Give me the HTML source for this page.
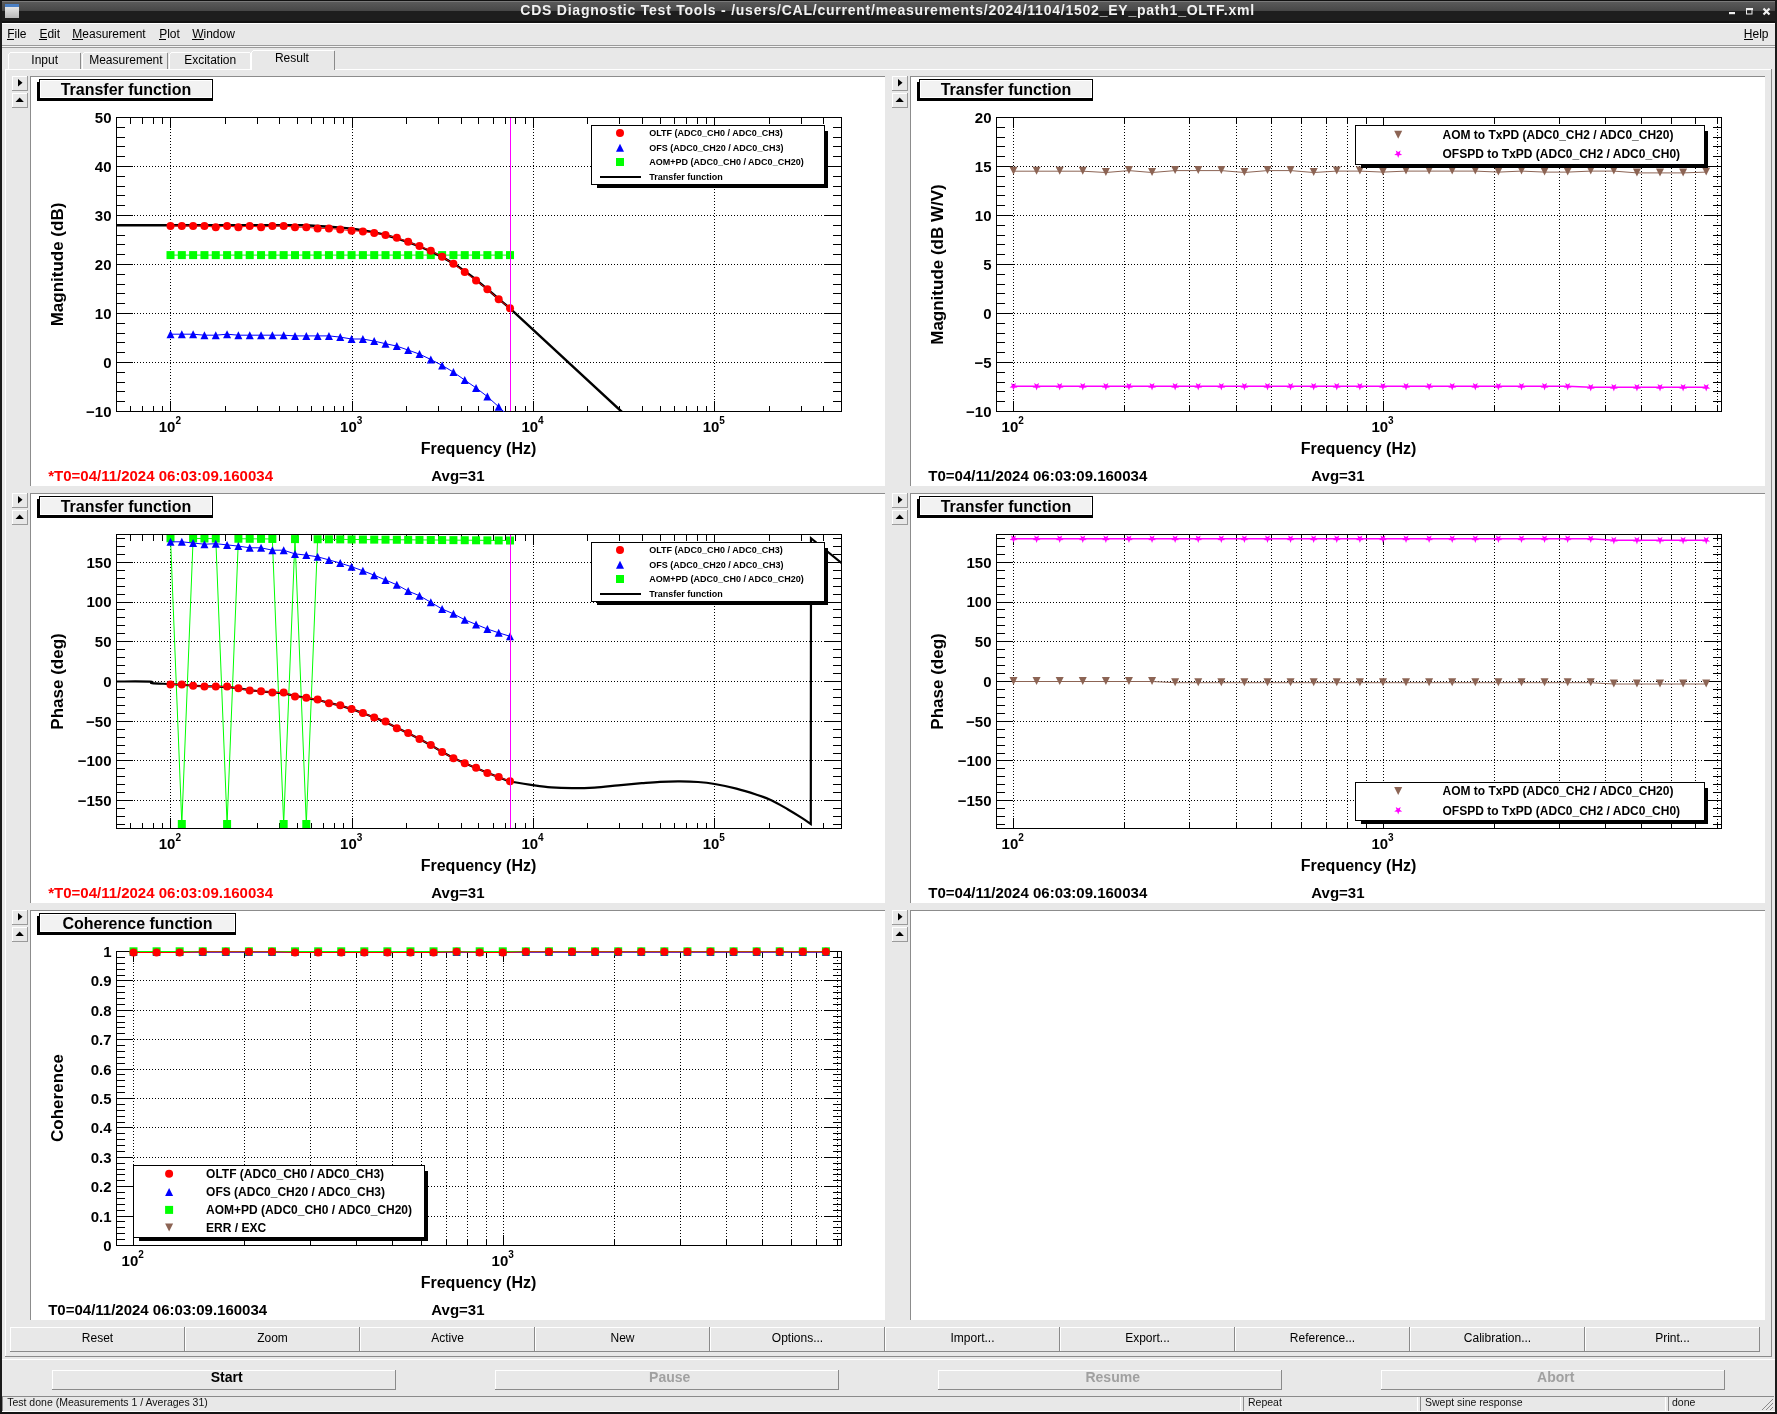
<!DOCTYPE html>
<html><head><meta charset="utf-8"><title>CDS Diagnostic Test Tools</title>
<style>html,body{margin:0;padding:0;background:#e8e8e8;overflow:hidden} svg{display:block;will-change:transform} text{font-family:"Liberation Sans",sans-serif}</style>
</head><body>
<svg width="1777" height="1414" viewBox="0 0 1777 1414" font-family="Liberation Sans, sans-serif">
<rect x="0" y="0" width="1777" height="1414" fill="#e8e8e8" />
<defs><linearGradient id="tbg" x1="0" y1="0" x2="0" y2="1"><stop offset="0" stop-color="#5a5a5a"/><stop offset="1" stop-color="#474747"/></linearGradient><linearGradient id="ico" x1="0" y1="0" x2="0" y2="1"><stop offset="0" stop-color="#f4f4f4"/><stop offset="1" stop-color="#b8b8b8"/></linearGradient></defs>
<rect x="0" y="0" width="1777" height="23" fill="#1e1e1e" />
<rect x="0" y="0" width="1777" height="1" fill="#111" />
<rect x="1" y="1" width="1775" height="1" fill="#7a7a7a" />
<rect x="1" y="2" width="1775" height="9" fill="url(#tbg)" />
<rect x="0" y="21" width="1777" height="2" fill="#121212" />
<rect x="5" y="4" width="14" height="14" fill="url(#ico)" />
<rect x="5" y="4" width="14" height="3" fill="#4a7fc4" />
<text x="520.3" y="14.6" font-size="14" font-weight="bold" text-anchor="start" fill="#f2f2f2" letter-spacing="0.77">CDS Diagnostic Test Tools - /users/CAL/current/measurements/2024/1104/1502_EY_path1_OLTF.xml</text>
<rect x="1729" y="12" width="6" height="2.2" fill="#f0f0f0" />
<rect x="1746.5" y="8.5" width="5.5" height="5.5" fill="none" stroke="#f0f0f0" stroke-width="1"/>
<rect x="1746" y="8" width="7" height="2" fill="#f0f0f0" />
<path d="M1763.5 8.5 L1769.5 14.5 M1769.5 8.5 L1763.5 14.5" stroke="#f0f0f0" stroke-width="2.2"/>
<rect x="0" y="0" width="2" height="1414" fill="#1a1a1a" />
<rect x="1775" y="0" width="2" height="1414" fill="#1a1a1a" />
<rect x="0" y="1412" width="1777" height="2" fill="#141414" />
<rect x="2" y="23" width="1773" height="1" fill="#ffffff" />
<text x="7.2" y="38" font-size="12" font-weight="normal" text-anchor="start" fill="#000" >File</text>
<text x="39.4" y="38" font-size="12" font-weight="normal" text-anchor="start" fill="#000" >Edit</text>
<text x="72.3" y="38" font-size="12" font-weight="normal" text-anchor="start" fill="#000" >Measurement</text>
<text x="159.2" y="38" font-size="12" font-weight="normal" text-anchor="start" fill="#000" >Plot</text>
<text x="192.2" y="38" font-size="12" font-weight="normal" text-anchor="start" fill="#000" >Window</text>
<rect x="7" y="39" width="7" height="1" fill="#000" />
<rect x="39" y="39" width="8" height="1" fill="#000" />
<rect x="72" y="39" width="11" height="1" fill="#000" />
<rect x="159" y="39" width="7" height="1" fill="#000" />
<rect x="192" y="39" width="12" height="1" fill="#000" />
<text x="1743.8" y="38" font-size="12" font-weight="normal" text-anchor="start" fill="#000" >Help</text>
<rect x="1744" y="39" width="9" height="1" fill="#000" />
<rect x="2" y="45" width="1773" height="1" fill="#9a9a9a" />
<rect x="2" y="46" width="1773" height="1" fill="#f4f4f4" />
<rect x="2" y="47" width="1773" height="1" fill="#9a9a9a" />
<rect x="8" y="52" width="73" height="18" fill="#e8e8e8" />
<rect x="10" y="52" width="70" height="1" fill="#ffffff" />
<rect x="8" y="54" width="1" height="16" fill="#ffffff" />
<rect x="9" y="53" width="1" height="1" fill="#fff"/>
<rect x="80" y="53" width="1" height="17" fill="#8a8a8a" />
<text x="44.7" y="64" font-size="12" font-weight="normal" text-anchor="middle" fill="#000" >Input</text>
<rect x="82" y="52" width="86" height="18" fill="#e8e8e8" />
<rect x="84" y="52" width="83" height="1" fill="#ffffff" />
<rect x="82" y="54" width="1" height="16" fill="#ffffff" />
<rect x="83" y="53" width="1" height="1" fill="#fff"/>
<rect x="167" y="53" width="1" height="17" fill="#8a8a8a" />
<text x="125.9" y="64" font-size="12" font-weight="normal" text-anchor="middle" fill="#000" >Measurement</text>
<rect x="169" y="52" width="82" height="18" fill="#e8e8e8" />
<rect x="171" y="52" width="79" height="1" fill="#ffffff" />
<rect x="169" y="54" width="1" height="16" fill="#ffffff" />
<rect x="170" y="53" width="1" height="1" fill="#fff"/>
<rect x="250" y="53" width="1" height="17" fill="#8a8a8a" />
<text x="210.2" y="64" font-size="12" font-weight="normal" text-anchor="middle" fill="#000" >Excitation</text>
<rect x="250" y="53" width="1" height="17" fill="#ffffff" />
<rect x="5" y="69" width="1767" height="1" fill="#ffffff" />
<rect x="5" y="69" width="1" height="1288" fill="#ffffff" />
<rect x="1771" y="69" width="1" height="1288" fill="#8a8a8a" />
<rect x="5" y="1356" width="1767" height="1" fill="#8a8a8a" />
<rect x="251" y="50" width="84" height="20" fill="#e8e8e8" />
<rect x="253" y="50" width="81" height="1" fill="#ffffff" />
<rect x="251" y="52" width="1" height="18" fill="#ffffff" />
<rect x="252" y="51" width="1" height="1" fill="#fff"/>
<rect x="334" y="51" width="1" height="19" fill="#8a8a8a" />
<text x="291.9" y="62" font-size="12" font-weight="normal" text-anchor="middle" fill="#000" >Result</text>
<rect x="252" y="69" width="82" height="1" fill="#e8e8e8" />
<rect x="30" y="76" width="855" height="410" fill="#ffffff" />
<rect x="30" y="76" width="855" height="1" fill="#8c8c8c" />
<rect x="30" y="76" width="1" height="410" fill="#8c8c8c" />
<rect x="910" y="76" width="855" height="410" fill="#ffffff" />
<rect x="910" y="76" width="855" height="1" fill="#8c8c8c" />
<rect x="910" y="76" width="1" height="410" fill="#8c8c8c" />
<rect x="30" y="493" width="855" height="410" fill="#ffffff" />
<rect x="30" y="493" width="855" height="1" fill="#8c8c8c" />
<rect x="30" y="493" width="1" height="410" fill="#8c8c8c" />
<rect x="910" y="493" width="855" height="410" fill="#ffffff" />
<rect x="910" y="493" width="855" height="1" fill="#8c8c8c" />
<rect x="910" y="493" width="1" height="410" fill="#8c8c8c" />
<rect x="30" y="910" width="855" height="410" fill="#ffffff" />
<rect x="30" y="910" width="855" height="1" fill="#8c8c8c" />
<rect x="30" y="910" width="1" height="410" fill="#8c8c8c" />
<rect x="910" y="910" width="855" height="410" fill="#ffffff" />
<rect x="910" y="910" width="855" height="1" fill="#8c8c8c" />
<rect x="910" y="910" width="1" height="410" fill="#8c8c8c" />
<rect x="12" y="76" width="16" height="15" fill="#e8e8e8" />
<rect x="12" y="76" width="16" height="1" fill="#ffffff" />
<rect x="12" y="76" width="1" height="15" fill="#ffffff" />
<rect x="12" y="90" width="16" height="1" fill="#9a9a9a" />
<rect x="27" y="76" width="1" height="15" fill="#9a9a9a" />
<path d="M18 79 L22.5 82.8 L18 86.5 Z" fill="#000"/>
<rect x="12" y="93" width="16" height="15" fill="#e8e8e8" />
<rect x="12" y="93" width="16" height="1" fill="#ffffff" />
<rect x="12" y="93" width="1" height="15" fill="#ffffff" />
<rect x="12" y="107" width="16" height="1" fill="#9a9a9a" />
<rect x="27" y="93" width="1" height="15" fill="#9a9a9a" />
<path d="M15.5 102 L19.7 97.5 L23.8 102 Z" fill="#000"/>
<rect x="12" y="493" width="16" height="15" fill="#e8e8e8" />
<rect x="12" y="493" width="16" height="1" fill="#ffffff" />
<rect x="12" y="493" width="1" height="15" fill="#ffffff" />
<rect x="12" y="507" width="16" height="1" fill="#9a9a9a" />
<rect x="27" y="493" width="1" height="15" fill="#9a9a9a" />
<path d="M18 496 L22.5 499.8 L18 503.5 Z" fill="#000"/>
<rect x="12" y="510" width="16" height="15" fill="#e8e8e8" />
<rect x="12" y="510" width="16" height="1" fill="#ffffff" />
<rect x="12" y="510" width="1" height="15" fill="#ffffff" />
<rect x="12" y="524" width="16" height="1" fill="#9a9a9a" />
<rect x="27" y="510" width="1" height="15" fill="#9a9a9a" />
<path d="M15.5 519 L19.7 514.5 L23.8 519 Z" fill="#000"/>
<rect x="12" y="910" width="16" height="15" fill="#e8e8e8" />
<rect x="12" y="910" width="16" height="1" fill="#ffffff" />
<rect x="12" y="910" width="1" height="15" fill="#ffffff" />
<rect x="12" y="924" width="16" height="1" fill="#9a9a9a" />
<rect x="27" y="910" width="1" height="15" fill="#9a9a9a" />
<path d="M18 913 L22.5 916.8 L18 920.5 Z" fill="#000"/>
<rect x="12" y="927" width="16" height="15" fill="#e8e8e8" />
<rect x="12" y="927" width="16" height="1" fill="#ffffff" />
<rect x="12" y="927" width="1" height="15" fill="#ffffff" />
<rect x="12" y="941" width="16" height="1" fill="#9a9a9a" />
<rect x="27" y="927" width="1" height="15" fill="#9a9a9a" />
<path d="M15.5 936 L19.7 931.5 L23.8 936 Z" fill="#000"/>
<rect x="892" y="76" width="16" height="15" fill="#e8e8e8" />
<rect x="892" y="76" width="16" height="1" fill="#ffffff" />
<rect x="892" y="76" width="1" height="15" fill="#ffffff" />
<rect x="892" y="90" width="16" height="1" fill="#9a9a9a" />
<rect x="907" y="76" width="1" height="15" fill="#9a9a9a" />
<path d="M898 79 L902.5 82.8 L898 86.5 Z" fill="#000"/>
<rect x="892" y="93" width="16" height="15" fill="#e8e8e8" />
<rect x="892" y="93" width="16" height="1" fill="#ffffff" />
<rect x="892" y="93" width="1" height="15" fill="#ffffff" />
<rect x="892" y="107" width="16" height="1" fill="#9a9a9a" />
<rect x="907" y="93" width="1" height="15" fill="#9a9a9a" />
<path d="M895.5 102 L899.7 97.5 L903.8 102 Z" fill="#000"/>
<rect x="892" y="493" width="16" height="15" fill="#e8e8e8" />
<rect x="892" y="493" width="16" height="1" fill="#ffffff" />
<rect x="892" y="493" width="1" height="15" fill="#ffffff" />
<rect x="892" y="507" width="16" height="1" fill="#9a9a9a" />
<rect x="907" y="493" width="1" height="15" fill="#9a9a9a" />
<path d="M898 496 L902.5 499.8 L898 503.5 Z" fill="#000"/>
<rect x="892" y="510" width="16" height="15" fill="#e8e8e8" />
<rect x="892" y="510" width="16" height="1" fill="#ffffff" />
<rect x="892" y="510" width="1" height="15" fill="#ffffff" />
<rect x="892" y="524" width="16" height="1" fill="#9a9a9a" />
<rect x="907" y="510" width="1" height="15" fill="#9a9a9a" />
<path d="M895.5 519 L899.7 514.5 L903.8 519 Z" fill="#000"/>
<rect x="892" y="910" width="16" height="15" fill="#e8e8e8" />
<rect x="892" y="910" width="16" height="1" fill="#ffffff" />
<rect x="892" y="910" width="1" height="15" fill="#ffffff" />
<rect x="892" y="924" width="16" height="1" fill="#9a9a9a" />
<rect x="907" y="910" width="1" height="15" fill="#9a9a9a" />
<path d="M898 913 L902.5 916.8 L898 920.5 Z" fill="#000"/>
<rect x="892" y="927" width="16" height="15" fill="#e8e8e8" />
<rect x="892" y="927" width="16" height="1" fill="#ffffff" />
<rect x="892" y="927" width="1" height="15" fill="#ffffff" />
<rect x="892" y="941" width="16" height="1" fill="#9a9a9a" />
<rect x="907" y="927" width="1" height="15" fill="#9a9a9a" />
<path d="M895.5 936 L899.7 931.5 L903.8 936 Z" fill="#000"/>
<rect x="10" y="1327" width="175" height="1" fill="#ffffff" />
<rect x="10" y="1327" width="1" height="25" fill="#ffffff" />
<rect x="10" y="1351" width="175" height="1" fill="#8a8a8a" />
<rect x="184" y="1327" width="1" height="25" fill="#8a8a8a" />
<text x="97.5" y="1342" font-size="12" font-weight="normal" text-anchor="middle" fill="#000" >Reset</text>
<rect x="185" y="1327" width="175" height="1" fill="#ffffff" />
<rect x="185" y="1327" width="1" height="25" fill="#ffffff" />
<rect x="185" y="1351" width="175" height="1" fill="#8a8a8a" />
<rect x="359" y="1327" width="1" height="25" fill="#8a8a8a" />
<text x="272.5" y="1342" font-size="12" font-weight="normal" text-anchor="middle" fill="#000" >Zoom</text>
<rect x="360" y="1327" width="175" height="1" fill="#ffffff" />
<rect x="360" y="1327" width="1" height="25" fill="#ffffff" />
<rect x="360" y="1351" width="175" height="1" fill="#8a8a8a" />
<rect x="534" y="1327" width="1" height="25" fill="#8a8a8a" />
<text x="447.5" y="1342" font-size="12" font-weight="normal" text-anchor="middle" fill="#000" >Active</text>
<rect x="535" y="1327" width="175" height="1" fill="#ffffff" />
<rect x="535" y="1327" width="1" height="25" fill="#ffffff" />
<rect x="535" y="1351" width="175" height="1" fill="#8a8a8a" />
<rect x="709" y="1327" width="1" height="25" fill="#8a8a8a" />
<text x="622.5" y="1342" font-size="12" font-weight="normal" text-anchor="middle" fill="#000" >New</text>
<rect x="710" y="1327" width="175" height="1" fill="#ffffff" />
<rect x="710" y="1327" width="1" height="25" fill="#ffffff" />
<rect x="710" y="1351" width="175" height="1" fill="#8a8a8a" />
<rect x="884" y="1327" width="1" height="25" fill="#8a8a8a" />
<text x="797.5" y="1342" font-size="12" font-weight="normal" text-anchor="middle" fill="#000" >Options...</text>
<rect x="885" y="1327" width="175" height="1" fill="#ffffff" />
<rect x="885" y="1327" width="1" height="25" fill="#ffffff" />
<rect x="885" y="1351" width="175" height="1" fill="#8a8a8a" />
<rect x="1059" y="1327" width="1" height="25" fill="#8a8a8a" />
<text x="972.5" y="1342" font-size="12" font-weight="normal" text-anchor="middle" fill="#000" >Import...</text>
<rect x="1060" y="1327" width="175" height="1" fill="#ffffff" />
<rect x="1060" y="1327" width="1" height="25" fill="#ffffff" />
<rect x="1060" y="1351" width="175" height="1" fill="#8a8a8a" />
<rect x="1234" y="1327" width="1" height="25" fill="#8a8a8a" />
<text x="1147.5" y="1342" font-size="12" font-weight="normal" text-anchor="middle" fill="#000" >Export...</text>
<rect x="1235" y="1327" width="175" height="1" fill="#ffffff" />
<rect x="1235" y="1327" width="1" height="25" fill="#ffffff" />
<rect x="1235" y="1351" width="175" height="1" fill="#8a8a8a" />
<rect x="1409" y="1327" width="1" height="25" fill="#8a8a8a" />
<text x="1322.5" y="1342" font-size="12" font-weight="normal" text-anchor="middle" fill="#000" >Reference...</text>
<rect x="1410" y="1327" width="175" height="1" fill="#ffffff" />
<rect x="1410" y="1327" width="1" height="25" fill="#ffffff" />
<rect x="1410" y="1351" width="175" height="1" fill="#8a8a8a" />
<rect x="1584" y="1327" width="1" height="25" fill="#8a8a8a" />
<text x="1497.5" y="1342" font-size="12" font-weight="normal" text-anchor="middle" fill="#000" >Calibration...</text>
<rect x="1585" y="1327" width="175" height="1" fill="#ffffff" />
<rect x="1585" y="1327" width="1" height="25" fill="#ffffff" />
<rect x="1585" y="1351" width="175" height="1" fill="#8a8a8a" />
<rect x="1759" y="1327" width="1" height="25" fill="#8a8a8a" />
<text x="1672.5" y="1342" font-size="12" font-weight="normal" text-anchor="middle" fill="#000" >Print...</text>
<rect x="2" y="1359" width="1773" height="1" fill="#ffffff" />
<rect x="52" y="1370" width="344" height="1" fill="#ffffff" />
<rect x="52" y="1370" width="1" height="20" fill="#ffffff" />
<rect x="52" y="1389" width="344" height="1" fill="#8a8a8a" />
<rect x="395" y="1370" width="1" height="20" fill="#8a8a8a" />
<text x="226.7" y="1382" font-size="14" font-weight="bold" text-anchor="middle" fill="#000" >Start</text>
<rect x="495" y="1370" width="344" height="1" fill="#ffffff" />
<rect x="495" y="1370" width="1" height="20" fill="#ffffff" />
<rect x="495" y="1389" width="344" height="1" fill="#8a8a8a" />
<rect x="838" y="1370" width="1" height="20" fill="#8a8a8a" />
<text x="669.7" y="1382" font-size="14" font-weight="bold" text-anchor="middle" fill="#a0a0a0" >Pause</text>
<rect x="938" y="1370" width="344" height="1" fill="#ffffff" />
<rect x="938" y="1370" width="1" height="20" fill="#ffffff" />
<rect x="938" y="1389" width="344" height="1" fill="#8a8a8a" />
<rect x="1281" y="1370" width="1" height="20" fill="#8a8a8a" />
<text x="1112.7" y="1382" font-size="14" font-weight="bold" text-anchor="middle" fill="#a0a0a0" >Resume</text>
<rect x="1381" y="1370" width="344" height="1" fill="#ffffff" />
<rect x="1381" y="1370" width="1" height="20" fill="#ffffff" />
<rect x="1381" y="1389" width="344" height="1" fill="#8a8a8a" />
<rect x="1724" y="1370" width="1" height="20" fill="#8a8a8a" />
<text x="1555.7" y="1382" font-size="14" font-weight="bold" text-anchor="middle" fill="#a0a0a0" >Abort</text>
<rect x="2" y="1396" width="1772" height="1" fill="#8a8a8a" />
<rect x="2" y="1411" width="1773" height="1" fill="#ffffff" />
<rect x="2" y="1397" width="1" height="14" fill="#8a8a8a" />
<rect x="1240" y="1397" width="1" height="14" fill="#ffffff" />
<rect x="1243" y="1397" width="1" height="14" fill="#8a8a8a" />
<rect x="1417" y="1397" width="1" height="14" fill="#ffffff" />
<rect x="1420" y="1397" width="1" height="14" fill="#8a8a8a" />
<rect x="1665" y="1397" width="1" height="14" fill="#ffffff" />
<rect x="1668" y="1397" width="1" height="14" fill="#8a8a8a" />
<text x="7.2" y="1406" font-size="10.5" font-weight="normal" text-anchor="start" fill="#111" >Test done (Measurements 1 / Averages 31)</text>
<text x="1248" y="1406" font-size="10.5" font-weight="normal" text-anchor="start" fill="#111" >Repeat</text>
<text x="1425" y="1406" font-size="10.5" font-weight="normal" text-anchor="start" fill="#111" >Swept sine response</text>
<text x="1672" y="1406" font-size="10.5" font-weight="normal" text-anchor="start" fill="#111" >done</text>
<path d="M1762 1410 L1773 1399 M1766 1410 L1773 1403 M1770 1410 L1773 1407" stroke="#8a8a8a" stroke-width="1"/>
<rect x="37" y="82" width="176" height="19" fill="#000" />
<rect x="39" y="79" width="174" height="20" fill="#000" />
<rect x="40" y="80" width="172" height="18" fill="#ffffff" />
<rect x="41" y="81" width="170" height="16" fill="#f2f2f2" />
<text x="126.0" y="94.8" font-size="16" font-weight="bold" text-anchor="middle" fill="#000" >Transfer function</text>
<path d="M116 166.5 H842 M116 215.5 H842 M116 264.5 H842 M116 313.5 H842 M116 362.5 H842 M170.5 117 V412 M352.5 117 V412 M533.5 117 V412 M714.5 117 V412" stroke="#000" stroke-width="1" stroke-dasharray="1 2" fill="none" shape-rendering="crispEdges"/>
<path d="M116 411.5 h9 M842 411.5 h-9.5 M116 401.5 h9 M842 401.5 h-9.5 M116 391.5 h9 M842 391.5 h-9.5 M116 382.5 h9 M842 382.5 h-9.5 M116 372.5 h9 M842 372.5 h-9.5 M116 362.5 h9 M842 362.5 h-9.5 M116 352.5 h9 M842 352.5 h-9.5 M116 342.5 h9 M842 342.5 h-9.5 M116 333.5 h9 M842 333.5 h-9.5 M116 323.5 h9 M842 323.5 h-9.5 M116 313.5 h9 M842 313.5 h-9.5 M116 303.5 h9 M842 303.5 h-9.5 M116 293.5 h9 M842 293.5 h-9.5 M116 284.5 h9 M842 284.5 h-9.5 M116 274.5 h9 M842 274.5 h-9.5 M116 264.5 h9 M842 264.5 h-9.5 M116 254.5 h9 M842 254.5 h-9.5 M116 244.5 h9 M842 244.5 h-9.5 M116 235.5 h9 M842 235.5 h-9.5 M116 225.5 h9 M842 225.5 h-9.5 M116 215.5 h9 M842 215.5 h-9.5 M116 205.5 h9 M842 205.5 h-9.5 M116 195.5 h9 M842 195.5 h-9.5 M116 186.5 h9 M842 186.5 h-9.5 M116 176.5 h9 M842 176.5 h-9.5 M116 166.5 h9 M842 166.5 h-9.5 M116 156.5 h9 M842 156.5 h-9.5 M116 146.5 h9 M842 146.5 h-9.5 M116 137.5 h9 M842 137.5 h-9.5 M116 127.5 h9 M842 127.5 h-9.5 M116 117.5 h9 M842 117.5 h-9.5 M116 117.5 h17 M842 117.5 h-17 M116 166.5 h17 M842 166.5 h-17 M116 215.5 h17 M842 215.5 h-17 M116 264.5 h17 M842 264.5 h-17 M116 313.5 h17 M842 313.5 h-17 M116 362.5 h17 M842 362.5 h-17 M116 411.5 h17 M842 411.5 h-17 M130.5 412 v-6.5 M130.5 117 v6.5 M142.5 412 v-6.5 M142.5 117 v6.5 M153.5 412 v-6.5 M153.5 117 v6.5 M162.5 412 v-6.5 M162.5 117 v6.5 M170.5 412 v-11 M170.5 117 v11 M225.5 412 v-6.5 M225.5 117 v6.5 M257.5 412 v-6.5 M257.5 117 v6.5 M279.5 412 v-6.5 M279.5 117 v6.5 M297.5 412 v-6.5 M297.5 117 v6.5 M311.5 412 v-6.5 M311.5 117 v6.5 M323.5 412 v-6.5 M323.5 117 v6.5 M334.5 412 v-6.5 M334.5 117 v6.5 M343.5 412 v-6.5 M343.5 117 v6.5 M352.5 412 v-11 M352.5 117 v11 M406.5 412 v-6.5 M406.5 117 v6.5 M438.5 412 v-6.5 M438.5 117 v6.5 M461.5 412 v-6.5 M461.5 117 v6.5 M478.5 412 v-6.5 M478.5 117 v6.5 M493.5 412 v-6.5 M493.5 117 v6.5 M505.5 412 v-6.5 M505.5 117 v6.5 M515.5 412 v-6.5 M515.5 117 v6.5 M525.5 412 v-6.5 M525.5 117 v6.5 M533.5 412 v-11 M533.5 117 v11 M587.5 412 v-6.5 M587.5 117 v6.5 M619.5 412 v-6.5 M619.5 117 v6.5 M642.5 412 v-6.5 M642.5 117 v6.5 M660.5 412 v-6.5 M660.5 117 v6.5 M674.5 412 v-6.5 M674.5 117 v6.5 M686.5 412 v-6.5 M686.5 117 v6.5 M697.5 412 v-6.5 M697.5 117 v6.5 M706.5 412 v-6.5 M706.5 117 v6.5 M714.5 412 v-11 M714.5 117 v11 M769.5 412 v-6.5 M769.5 117 v6.5 M801.5 412 v-6.5 M801.5 117 v6.5 M823.5 412 v-6.5 M823.5 117 v6.5 M841.5 412 v-6.5 M841.5 117 v6.5" stroke="#000" stroke-width="1" fill="none" shape-rendering="crispEdges"/>
<rect x="116.5" y="117.5" width="725" height="294" fill="none" stroke="#000" stroke-width="1" shape-rendering="crispEdges"/>
<text x="111.5" y="122.9" font-size="15" font-weight="bold" text-anchor="end" fill="#000" >50</text>
<text x="111.5" y="171.9" font-size="15" font-weight="bold" text-anchor="end" fill="#000" >40</text>
<text x="111.5" y="220.9" font-size="15" font-weight="bold" text-anchor="end" fill="#000" >30</text>
<text x="111.5" y="269.9" font-size="15" font-weight="bold" text-anchor="end" fill="#000" >20</text>
<text x="111.5" y="318.9" font-size="15" font-weight="bold" text-anchor="end" fill="#000" >10</text>
<text x="111.5" y="367.9" font-size="15" font-weight="bold" text-anchor="end" fill="#000" >0</text>
<text x="111.5" y="416.9" font-size="15" font-weight="bold" text-anchor="end" fill="#000" >−10</text>
<text x="169.90" y="432" font-size="15" font-weight="bold" text-anchor="middle">10<tspan font-size="10" dy="-7.6">2</tspan></text>
<text x="351.20" y="432" font-size="15" font-weight="bold" text-anchor="middle">10<tspan font-size="10" dy="-7.6">3</tspan></text>
<text x="532.50" y="432" font-size="15" font-weight="bold" text-anchor="middle">10<tspan font-size="10" dy="-7.6">4</tspan></text>
<text x="713.80" y="432" font-size="15" font-weight="bold" text-anchor="middle">10<tspan font-size="10" dy="-7.6">5</tspan></text>
<defs>
<clipPath id="c1"><rect x="117" y="118" width="725" height="294"/></clipPath>
<clipPath id="c2"><rect x="117" y="535" width="725" height="294"/></clipPath>
<clipPath id="c3"><rect x="117" y="952" width="725" height="294"/></clipPath>
<clipPath id="c4"><rect x="997" y="118" width="725" height="294"/></clipPath>
<clipPath id="c5"><rect x="997" y="535" width="725" height="294"/></clipPath>
</defs>
<g clip-path="url(#c1)">
<polyline points="170.50,255.10 181.82,255.10 193.13,255.10 204.45,255.10 215.77,255.10 227.09,255.10 238.40,255.10 249.72,255.10 261.04,255.10 272.35,255.10 283.67,255.10 294.99,255.10 306.30,255.10 317.62,255.10 328.94,255.10 340.25,255.10 351.57,255.10 362.89,255.10 374.21,255.10 385.52,255.10 396.84,255.10 408.16,255.10 419.47,255.10 430.79,255.10 442.11,255.10 453.43,255.10 464.74,255.10 476.06,255.10 487.38,255.10 498.69,255.10 510.01,255.10" fill="none" stroke="#00ff00" stroke-width="1" stroke-linejoin="round" />
<rect x="166.50" y="251.10" width="8.00" height="8.00" fill="#00ff00"/>
<rect x="177.82" y="251.10" width="8.00" height="8.00" fill="#00ff00"/>
<rect x="189.13" y="251.10" width="8.00" height="8.00" fill="#00ff00"/>
<rect x="200.45" y="251.10" width="8.00" height="8.00" fill="#00ff00"/>
<rect x="211.77" y="251.10" width="8.00" height="8.00" fill="#00ff00"/>
<rect x="223.09" y="251.10" width="8.00" height="8.00" fill="#00ff00"/>
<rect x="234.40" y="251.10" width="8.00" height="8.00" fill="#00ff00"/>
<rect x="245.72" y="251.10" width="8.00" height="8.00" fill="#00ff00"/>
<rect x="257.04" y="251.10" width="8.00" height="8.00" fill="#00ff00"/>
<rect x="268.35" y="251.10" width="8.00" height="8.00" fill="#00ff00"/>
<rect x="279.67" y="251.10" width="8.00" height="8.00" fill="#00ff00"/>
<rect x="290.99" y="251.10" width="8.00" height="8.00" fill="#00ff00"/>
<rect x="302.30" y="251.10" width="8.00" height="8.00" fill="#00ff00"/>
<rect x="313.62" y="251.10" width="8.00" height="8.00" fill="#00ff00"/>
<rect x="324.94" y="251.10" width="8.00" height="8.00" fill="#00ff00"/>
<rect x="336.25" y="251.10" width="8.00" height="8.00" fill="#00ff00"/>
<rect x="347.57" y="251.10" width="8.00" height="8.00" fill="#00ff00"/>
<rect x="358.89" y="251.10" width="8.00" height="8.00" fill="#00ff00"/>
<rect x="370.21" y="251.10" width="8.00" height="8.00" fill="#00ff00"/>
<rect x="381.52" y="251.10" width="8.00" height="8.00" fill="#00ff00"/>
<rect x="392.84" y="251.10" width="8.00" height="8.00" fill="#00ff00"/>
<rect x="404.16" y="251.10" width="8.00" height="8.00" fill="#00ff00"/>
<rect x="415.47" y="251.10" width="8.00" height="8.00" fill="#00ff00"/>
<rect x="426.79" y="251.10" width="8.00" height="8.00" fill="#00ff00"/>
<rect x="438.11" y="251.10" width="8.00" height="8.00" fill="#00ff00"/>
<rect x="449.43" y="251.10" width="8.00" height="8.00" fill="#00ff00"/>
<rect x="460.74" y="251.10" width="8.00" height="8.00" fill="#00ff00"/>
<rect x="472.06" y="251.10" width="8.00" height="8.00" fill="#00ff00"/>
<rect x="483.38" y="251.10" width="8.00" height="8.00" fill="#00ff00"/>
<rect x="494.69" y="251.10" width="8.00" height="8.00" fill="#00ff00"/>
<rect x="506.01" y="251.10" width="8.00" height="8.00" fill="#00ff00"/>
<polyline points="170.50,334.20 181.82,334.20 193.13,334.20 204.45,335.20 215.77,335.20 227.09,334.20 238.40,335.20 249.72,335.20 261.04,335.20 272.35,335.20 283.67,335.20 294.99,335.90 306.30,335.90 317.62,335.90 328.94,335.90 340.25,337.10 351.57,339.00 362.89,339.00 374.21,341.10 385.52,343.70 396.84,346.10 408.16,350.10 419.47,354.10 430.79,359.50 442.11,365.40 453.43,372.10 464.74,380.10 476.06,387.90 487.38,396.60 498.69,406.80 510.01,417.50" fill="none" stroke="#0000ff" stroke-width="1" stroke-linejoin="round" />
<path d="M166.50 338.20 L170.50 330.20 L174.50 338.20 Z" fill="#0000ff"/>
<path d="M177.82 338.20 L181.82 330.20 L185.82 338.20 Z" fill="#0000ff"/>
<path d="M189.13 338.20 L193.13 330.20 L197.13 338.20 Z" fill="#0000ff"/>
<path d="M200.45 339.20 L204.45 331.20 L208.45 339.20 Z" fill="#0000ff"/>
<path d="M211.77 339.20 L215.77 331.20 L219.77 339.20 Z" fill="#0000ff"/>
<path d="M223.09 338.20 L227.09 330.20 L231.09 338.20 Z" fill="#0000ff"/>
<path d="M234.40 339.20 L238.40 331.20 L242.40 339.20 Z" fill="#0000ff"/>
<path d="M245.72 339.20 L249.72 331.20 L253.72 339.20 Z" fill="#0000ff"/>
<path d="M257.04 339.20 L261.04 331.20 L265.04 339.20 Z" fill="#0000ff"/>
<path d="M268.35 339.20 L272.35 331.20 L276.35 339.20 Z" fill="#0000ff"/>
<path d="M279.67 339.20 L283.67 331.20 L287.67 339.20 Z" fill="#0000ff"/>
<path d="M290.99 339.90 L294.99 331.90 L298.99 339.90 Z" fill="#0000ff"/>
<path d="M302.30 339.90 L306.30 331.90 L310.30 339.90 Z" fill="#0000ff"/>
<path d="M313.62 339.90 L317.62 331.90 L321.62 339.90 Z" fill="#0000ff"/>
<path d="M324.94 339.90 L328.94 331.90 L332.94 339.90 Z" fill="#0000ff"/>
<path d="M336.25 341.10 L340.25 333.10 L344.25 341.10 Z" fill="#0000ff"/>
<path d="M347.57 343.00 L351.57 335.00 L355.57 343.00 Z" fill="#0000ff"/>
<path d="M358.89 343.00 L362.89 335.00 L366.89 343.00 Z" fill="#0000ff"/>
<path d="M370.21 345.10 L374.21 337.10 L378.21 345.10 Z" fill="#0000ff"/>
<path d="M381.52 347.70 L385.52 339.70 L389.52 347.70 Z" fill="#0000ff"/>
<path d="M392.84 350.10 L396.84 342.10 L400.84 350.10 Z" fill="#0000ff"/>
<path d="M404.16 354.10 L408.16 346.10 L412.16 354.10 Z" fill="#0000ff"/>
<path d="M415.47 358.10 L419.47 350.10 L423.47 358.10 Z" fill="#0000ff"/>
<path d="M426.79 363.50 L430.79 355.50 L434.79 363.50 Z" fill="#0000ff"/>
<path d="M438.11 369.40 L442.11 361.40 L446.11 369.40 Z" fill="#0000ff"/>
<path d="M449.43 376.10 L453.43 368.10 L457.43 376.10 Z" fill="#0000ff"/>
<path d="M460.74 384.10 L464.74 376.10 L468.74 384.10 Z" fill="#0000ff"/>
<path d="M472.06 391.90 L476.06 383.90 L480.06 391.90 Z" fill="#0000ff"/>
<path d="M483.38 400.60 L487.38 392.60 L491.38 400.60 Z" fill="#0000ff"/>
<path d="M494.69 410.80 L498.69 402.80 L502.69 410.80 Z" fill="#0000ff"/>
<path d="M116.50 225.30 C125.50 225.30 159.61 225.30 170.50 225.30 C181.39 225.30 178.04 225.30 181.82 225.30 C185.59 225.30 189.36 225.30 193.13 225.30 C196.91 225.30 200.68 225.30 204.45 225.30 C208.22 225.30 212.00 225.30 215.77 225.30 C219.54 225.30 223.31 225.30 227.09 225.30 C230.86 225.30 234.63 225.30 238.40 225.30 C242.17 225.30 245.95 225.30 249.72 225.30 C253.49 225.30 257.26 225.30 261.04 225.30 C264.81 225.30 268.58 225.30 272.35 225.30 C276.13 225.30 279.90 225.30 283.67 225.30 C287.44 225.30 291.21 225.30 294.99 225.30 C298.76 225.30 302.53 225.18 306.30 225.30 C310.08 225.42 313.85 225.77 317.62 226.00 C321.39 226.23 325.17 226.43 328.94 226.70 C332.71 226.97 336.48 227.25 340.25 227.60 C344.03 227.95 347.80 228.33 351.57 228.80 C355.34 229.27 359.12 229.80 362.89 230.40 C366.66 231.00 370.43 231.63 374.21 232.40 C377.98 233.17 381.75 234.02 385.52 235.00 C389.30 235.98 393.07 237.12 396.84 238.30 C400.61 239.48 404.38 240.73 408.16 242.10 C411.93 243.47 415.70 244.95 419.47 246.50 C423.25 248.05 427.02 249.63 430.79 251.40 C434.56 253.17 438.34 255.07 442.11 257.10 C445.88 259.13 449.65 261.25 453.43 263.60 C457.20 265.95 460.97 268.52 464.74 271.20 C468.51 273.88 472.29 276.70 476.06 279.70 C479.83 282.70 483.60 286.02 487.38 289.20 C491.15 292.38 494.92 295.62 498.69 298.80 C502.47 301.98 508.12 306.72 510.01 308.30 L622.5 412.5" fill="none" stroke="#000" stroke-width="2.4"/>
<polyline points="170.50,226.00 181.82,226.00 193.13,226.00 204.45,226.00 215.77,227.20 227.09,226.00 238.40,227.20 249.72,226.00 261.04,227.20 272.35,226.00 283.67,226.00 294.99,227.20 306.30,227.20 317.62,228.40 328.94,228.40 340.25,229.50 351.57,230.70 362.89,231.40 374.21,233.10 385.52,235.00 396.84,237.80 408.16,241.80 419.47,246.10 430.79,250.80 442.11,256.70 453.43,263.80 464.74,272.10 476.06,280.40 487.38,289.30 498.69,299.30 510.01,308.20" fill="none" stroke="#ff0000" stroke-width="1" stroke-linejoin="round" />
<circle cx="170.50" cy="226.00" r="4.00" fill="#ff0000"/>
<circle cx="181.82" cy="226.00" r="4.00" fill="#ff0000"/>
<circle cx="193.13" cy="226.00" r="4.00" fill="#ff0000"/>
<circle cx="204.45" cy="226.00" r="4.00" fill="#ff0000"/>
<circle cx="215.77" cy="227.20" r="4.00" fill="#ff0000"/>
<circle cx="227.09" cy="226.00" r="4.00" fill="#ff0000"/>
<circle cx="238.40" cy="227.20" r="4.00" fill="#ff0000"/>
<circle cx="249.72" cy="226.00" r="4.00" fill="#ff0000"/>
<circle cx="261.04" cy="227.20" r="4.00" fill="#ff0000"/>
<circle cx="272.35" cy="226.00" r="4.00" fill="#ff0000"/>
<circle cx="283.67" cy="226.00" r="4.00" fill="#ff0000"/>
<circle cx="294.99" cy="227.20" r="4.00" fill="#ff0000"/>
<circle cx="306.30" cy="227.20" r="4.00" fill="#ff0000"/>
<circle cx="317.62" cy="228.40" r="4.00" fill="#ff0000"/>
<circle cx="328.94" cy="228.40" r="4.00" fill="#ff0000"/>
<circle cx="340.25" cy="229.50" r="4.00" fill="#ff0000"/>
<circle cx="351.57" cy="230.70" r="4.00" fill="#ff0000"/>
<circle cx="362.89" cy="231.40" r="4.00" fill="#ff0000"/>
<circle cx="374.21" cy="233.10" r="4.00" fill="#ff0000"/>
<circle cx="385.52" cy="235.00" r="4.00" fill="#ff0000"/>
<circle cx="396.84" cy="237.80" r="4.00" fill="#ff0000"/>
<circle cx="408.16" cy="241.80" r="4.00" fill="#ff0000"/>
<circle cx="419.47" cy="246.10" r="4.00" fill="#ff0000"/>
<circle cx="430.79" cy="250.80" r="4.00" fill="#ff0000"/>
<circle cx="442.11" cy="256.70" r="4.00" fill="#ff0000"/>
<circle cx="453.43" cy="263.80" r="4.00" fill="#ff0000"/>
<circle cx="464.74" cy="272.10" r="4.00" fill="#ff0000"/>
<circle cx="476.06" cy="280.40" r="4.00" fill="#ff0000"/>
<circle cx="487.38" cy="289.30" r="4.00" fill="#ff0000"/>
<circle cx="498.69" cy="299.30" r="4.00" fill="#ff0000"/>
<circle cx="510.01" cy="308.20" r="4.00" fill="#ff0000"/>
</g>
<rect x="510" y="118" width="1" height="293" fill="#ff00ff" />
<rect x="597" y="131" width="231" height="57" fill="#000" />
<rect x="591" y="125" width="234" height="60" fill="#000" />
<rect x="592" y="126" width="232" height="58" fill="#fff" />
<circle cx="620.00" cy="133.00" r="4.00" fill="#ff0000"/>
<text x="649.2" y="136.24" font-size="9" font-weight="bold" text-anchor="start" fill="#000" >OLTF (ADC0_CH0 / ADC0_CH3)</text>
<path d="M616.00 151.70 L620.00 143.70 L624.00 151.70 Z" fill="#0000ff"/>
<text x="649.2" y="150.94" font-size="9" font-weight="bold" text-anchor="start" fill="#000" >OFS (ADC0_CH20 / ADC0_CH3)</text>
<rect x="616.00" y="158.00" width="8.00" height="8.00" fill="#00ff00"/>
<text x="649.2" y="165.24" font-size="9" font-weight="bold" text-anchor="start" fill="#000" >AOM+PD (ADC0_CH0 / ADC0_CH20)</text>
<rect x="600" y="176" width="41" height="2" fill="#000" />
<text x="649.2" y="180.24" font-size="9" font-weight="bold" text-anchor="start" fill="#000" >Transfer function</text>
<text x="478.5" y="453.6" font-size="16" font-weight="bold" text-anchor="middle" fill="#000" >Frequency (Hz)</text>
<text transform="translate(63.4,264.5) rotate(-90)" font-size="17" font-weight="bold" text-anchor="middle">Magnitude (dB)</text>
<text x="48.2" y="480.5" font-size="15" font-weight="bold" text-anchor="start" fill="#ff0000" >*T0=04/11/2024 06:03:09.160034</text>
<text x="431.3" y="480.5" font-size="15" font-weight="bold" text-anchor="start" fill="#000" >Avg=31</text>
<rect x="37" y="499" width="176" height="19" fill="#000" />
<rect x="39" y="496" width="174" height="20" fill="#000" />
<rect x="40" y="497" width="172" height="18" fill="#ffffff" />
<rect x="41" y="498" width="170" height="16" fill="#f2f2f2" />
<text x="126.0" y="511.8" font-size="16" font-weight="bold" text-anchor="middle" fill="#000" >Transfer function</text>
<path d="M116 562.5 H842 M116 602.5 H842 M116 641.5 H842 M116 681.5 H842 M116 721.5 H842 M116 760.5 H842 M116 800.5 H842 M170.5 534 V829 M352.5 534 V829 M533.5 534 V829 M714.5 534 V829" stroke="#000" stroke-width="1" stroke-dasharray="1 2" fill="none" shape-rendering="crispEdges"/>
<path d="M116 824.5 h9 M842 824.5 h-9.5 M116 816.5 h9 M842 816.5 h-9.5 M116 808.5 h9 M842 808.5 h-9.5 M116 800.5 h9 M842 800.5 h-9.5 M116 792.5 h9 M842 792.5 h-9.5 M116 784.5 h9 M842 784.5 h-9.5 M116 776.5 h9 M842 776.5 h-9.5 M116 768.5 h9 M842 768.5 h-9.5 M116 760.5 h9 M842 760.5 h-9.5 M116 753.5 h9 M842 753.5 h-9.5 M116 745.5 h9 M842 745.5 h-9.5 M116 737.5 h9 M842 737.5 h-9.5 M116 729.5 h9 M842 729.5 h-9.5 M116 721.5 h9 M842 721.5 h-9.5 M116 713.5 h9 M842 713.5 h-9.5 M116 705.5 h9 M842 705.5 h-9.5 M116 697.5 h9 M842 697.5 h-9.5 M116 689.5 h9 M842 689.5 h-9.5 M116 681.5 h9 M842 681.5 h-9.5 M116 673.5 h9 M842 673.5 h-9.5 M116 665.5 h9 M842 665.5 h-9.5 M116 657.5 h9 M842 657.5 h-9.5 M116 649.5 h9 M842 649.5 h-9.5 M116 641.5 h9 M842 641.5 h-9.5 M116 633.5 h9 M842 633.5 h-9.5 M116 625.5 h9 M842 625.5 h-9.5 M116 617.5 h9 M842 617.5 h-9.5 M116 609.5 h9 M842 609.5 h-9.5 M116 602.5 h9 M842 602.5 h-9.5 M116 594.5 h9 M842 594.5 h-9.5 M116 586.5 h9 M842 586.5 h-9.5 M116 578.5 h9 M842 578.5 h-9.5 M116 570.5 h9 M842 570.5 h-9.5 M116 562.5 h9 M842 562.5 h-9.5 M116 554.5 h9 M842 554.5 h-9.5 M116 546.5 h9 M842 546.5 h-9.5 M116 538.5 h9 M842 538.5 h-9.5 M116 562.5 h17 M842 562.5 h-17 M116 602.5 h17 M842 602.5 h-17 M116 641.5 h17 M842 641.5 h-17 M116 681.5 h17 M842 681.5 h-17 M116 721.5 h17 M842 721.5 h-17 M116 760.5 h17 M842 760.5 h-17 M116 800.5 h17 M842 800.5 h-17 M130.5 829 v-6.5 M130.5 534 v6.5 M142.5 829 v-6.5 M142.5 534 v6.5 M153.5 829 v-6.5 M153.5 534 v6.5 M162.5 829 v-6.5 M162.5 534 v6.5 M170.5 829 v-11 M170.5 534 v11 M225.5 829 v-6.5 M225.5 534 v6.5 M257.5 829 v-6.5 M257.5 534 v6.5 M279.5 829 v-6.5 M279.5 534 v6.5 M297.5 829 v-6.5 M297.5 534 v6.5 M311.5 829 v-6.5 M311.5 534 v6.5 M323.5 829 v-6.5 M323.5 534 v6.5 M334.5 829 v-6.5 M334.5 534 v6.5 M343.5 829 v-6.5 M343.5 534 v6.5 M352.5 829 v-11 M352.5 534 v11 M406.5 829 v-6.5 M406.5 534 v6.5 M438.5 829 v-6.5 M438.5 534 v6.5 M461.5 829 v-6.5 M461.5 534 v6.5 M478.5 829 v-6.5 M478.5 534 v6.5 M493.5 829 v-6.5 M493.5 534 v6.5 M505.5 829 v-6.5 M505.5 534 v6.5 M515.5 829 v-6.5 M515.5 534 v6.5 M525.5 829 v-6.5 M525.5 534 v6.5 M533.5 829 v-11 M533.5 534 v11 M587.5 829 v-6.5 M587.5 534 v6.5 M619.5 829 v-6.5 M619.5 534 v6.5 M642.5 829 v-6.5 M642.5 534 v6.5 M660.5 829 v-6.5 M660.5 534 v6.5 M674.5 829 v-6.5 M674.5 534 v6.5 M686.5 829 v-6.5 M686.5 534 v6.5 M697.5 829 v-6.5 M697.5 534 v6.5 M706.5 829 v-6.5 M706.5 534 v6.5 M714.5 829 v-11 M714.5 534 v11 M769.5 829 v-6.5 M769.5 534 v6.5 M801.5 829 v-6.5 M801.5 534 v6.5 M823.5 829 v-6.5 M823.5 534 v6.5 M841.5 829 v-6.5 M841.5 534 v6.5" stroke="#000" stroke-width="1" fill="none" shape-rendering="crispEdges"/>
<rect x="116.5" y="534.5" width="725" height="294" fill="none" stroke="#000" stroke-width="1" shape-rendering="crispEdges"/>
<text x="111.5" y="567.7108108108108" font-size="15" font-weight="bold" text-anchor="end" fill="#000" >150</text>
<text x="111.5" y="607.4405405405405" font-size="15" font-weight="bold" text-anchor="end" fill="#000" >100</text>
<text x="111.5" y="647.1702702702703" font-size="15" font-weight="bold" text-anchor="end" fill="#000" >50</text>
<text x="111.5" y="686.9" font-size="15" font-weight="bold" text-anchor="end" fill="#000" >0</text>
<text x="111.5" y="726.6297297297298" font-size="15" font-weight="bold" text-anchor="end" fill="#000" >−50</text>
<text x="111.5" y="766.3594594594595" font-size="15" font-weight="bold" text-anchor="end" fill="#000" >−100</text>
<text x="111.5" y="806.0891891891891" font-size="15" font-weight="bold" text-anchor="end" fill="#000" >−150</text>
<text x="169.90" y="849" font-size="15" font-weight="bold" text-anchor="middle">10<tspan font-size="10" dy="-7.6">2</tspan></text>
<text x="351.20" y="849" font-size="15" font-weight="bold" text-anchor="middle">10<tspan font-size="10" dy="-7.6">3</tspan></text>
<text x="532.50" y="849" font-size="15" font-weight="bold" text-anchor="middle">10<tspan font-size="10" dy="-7.6">4</tspan></text>
<text x="713.80" y="849" font-size="15" font-weight="bold" text-anchor="middle">10<tspan font-size="10" dy="-7.6">5</tspan></text>
<g clip-path="url(#c2)">
<polyline points="170.50,538.30 181.82,824.00 193.13,538.45 204.45,538.52 215.77,538.59 227.09,824.00 238.40,538.74 249.72,538.81 261.04,538.89 272.35,538.96 283.67,824.00 294.99,539.11 306.30,824.00 317.62,539.25 328.94,539.33 340.25,539.40 351.57,539.47 362.89,539.55 374.21,539.62 385.52,539.69 396.84,539.77 408.16,539.84 419.47,539.91 430.79,539.99 442.11,540.06 453.43,540.13 464.74,540.21 476.06,540.28 487.38,540.35 498.69,540.43 510.01,540.50" fill="none" stroke="#00ff00" stroke-width="1" stroke-linejoin="round" />
<rect x="166.50" y="534.30" width="8.00" height="8.00" fill="#00ff00"/>
<rect x="177.82" y="820.00" width="8.00" height="8.00" fill="#00ff00"/>
<rect x="189.13" y="534.45" width="8.00" height="8.00" fill="#00ff00"/>
<rect x="200.45" y="534.52" width="8.00" height="8.00" fill="#00ff00"/>
<rect x="211.77" y="534.59" width="8.00" height="8.00" fill="#00ff00"/>
<rect x="223.09" y="820.00" width="8.00" height="8.00" fill="#00ff00"/>
<rect x="234.40" y="534.74" width="8.00" height="8.00" fill="#00ff00"/>
<rect x="245.72" y="534.81" width="8.00" height="8.00" fill="#00ff00"/>
<rect x="257.04" y="534.89" width="8.00" height="8.00" fill="#00ff00"/>
<rect x="268.35" y="534.96" width="8.00" height="8.00" fill="#00ff00"/>
<rect x="279.67" y="820.00" width="8.00" height="8.00" fill="#00ff00"/>
<rect x="290.99" y="535.11" width="8.00" height="8.00" fill="#00ff00"/>
<rect x="302.30" y="820.00" width="8.00" height="8.00" fill="#00ff00"/>
<rect x="313.62" y="535.25" width="8.00" height="8.00" fill="#00ff00"/>
<rect x="324.94" y="535.33" width="8.00" height="8.00" fill="#00ff00"/>
<rect x="336.25" y="535.40" width="8.00" height="8.00" fill="#00ff00"/>
<rect x="347.57" y="535.47" width="8.00" height="8.00" fill="#00ff00"/>
<rect x="358.89" y="535.55" width="8.00" height="8.00" fill="#00ff00"/>
<rect x="370.21" y="535.62" width="8.00" height="8.00" fill="#00ff00"/>
<rect x="381.52" y="535.69" width="8.00" height="8.00" fill="#00ff00"/>
<rect x="392.84" y="535.77" width="8.00" height="8.00" fill="#00ff00"/>
<rect x="404.16" y="535.84" width="8.00" height="8.00" fill="#00ff00"/>
<rect x="415.47" y="535.91" width="8.00" height="8.00" fill="#00ff00"/>
<rect x="426.79" y="535.99" width="8.00" height="8.00" fill="#00ff00"/>
<rect x="438.11" y="536.06" width="8.00" height="8.00" fill="#00ff00"/>
<rect x="449.43" y="536.13" width="8.00" height="8.00" fill="#00ff00"/>
<rect x="460.74" y="536.21" width="8.00" height="8.00" fill="#00ff00"/>
<rect x="472.06" y="536.28" width="8.00" height="8.00" fill="#00ff00"/>
<rect x="483.38" y="536.35" width="8.00" height="8.00" fill="#00ff00"/>
<rect x="494.69" y="536.43" width="8.00" height="8.00" fill="#00ff00"/>
<rect x="506.01" y="536.50" width="8.00" height="8.00" fill="#00ff00"/>
<polyline points="170.50,541.80 181.82,541.80 193.13,543.00 204.45,544.20 215.77,543.70 227.09,544.90 238.40,546.10 249.72,547.80 261.04,547.80 272.35,550.20 283.67,550.20 294.99,553.90 306.30,555.10 317.62,556.80 328.94,559.90 340.25,563.10 351.57,566.70 362.89,570.80 374.21,575.20 385.52,580.00 396.84,584.80 408.16,591.10 419.47,595.70 430.79,602.30 442.11,609.00 453.43,613.80 464.74,619.80 476.06,624.40 487.38,629.00 498.69,632.80 510.01,636.30" fill="none" stroke="#0000ff" stroke-width="1" stroke-linejoin="round" />
<path d="M166.50 545.80 L170.50 537.80 L174.50 545.80 Z" fill="#0000ff"/>
<path d="M177.82 545.80 L181.82 537.80 L185.82 545.80 Z" fill="#0000ff"/>
<path d="M189.13 547.00 L193.13 539.00 L197.13 547.00 Z" fill="#0000ff"/>
<path d="M200.45 548.20 L204.45 540.20 L208.45 548.20 Z" fill="#0000ff"/>
<path d="M211.77 547.70 L215.77 539.70 L219.77 547.70 Z" fill="#0000ff"/>
<path d="M223.09 548.90 L227.09 540.90 L231.09 548.90 Z" fill="#0000ff"/>
<path d="M234.40 550.10 L238.40 542.10 L242.40 550.10 Z" fill="#0000ff"/>
<path d="M245.72 551.80 L249.72 543.80 L253.72 551.80 Z" fill="#0000ff"/>
<path d="M257.04 551.80 L261.04 543.80 L265.04 551.80 Z" fill="#0000ff"/>
<path d="M268.35 554.20 L272.35 546.20 L276.35 554.20 Z" fill="#0000ff"/>
<path d="M279.67 554.20 L283.67 546.20 L287.67 554.20 Z" fill="#0000ff"/>
<path d="M290.99 557.90 L294.99 549.90 L298.99 557.90 Z" fill="#0000ff"/>
<path d="M302.30 559.10 L306.30 551.10 L310.30 559.10 Z" fill="#0000ff"/>
<path d="M313.62 560.80 L317.62 552.80 L321.62 560.80 Z" fill="#0000ff"/>
<path d="M324.94 563.90 L328.94 555.90 L332.94 563.90 Z" fill="#0000ff"/>
<path d="M336.25 567.10 L340.25 559.10 L344.25 567.10 Z" fill="#0000ff"/>
<path d="M347.57 570.70 L351.57 562.70 L355.57 570.70 Z" fill="#0000ff"/>
<path d="M358.89 574.80 L362.89 566.80 L366.89 574.80 Z" fill="#0000ff"/>
<path d="M370.21 579.20 L374.21 571.20 L378.21 579.20 Z" fill="#0000ff"/>
<path d="M381.52 584.00 L385.52 576.00 L389.52 584.00 Z" fill="#0000ff"/>
<path d="M392.84 588.80 L396.84 580.80 L400.84 588.80 Z" fill="#0000ff"/>
<path d="M404.16 595.10 L408.16 587.10 L412.16 595.10 Z" fill="#0000ff"/>
<path d="M415.47 599.70 L419.47 591.70 L423.47 599.70 Z" fill="#0000ff"/>
<path d="M426.79 606.30 L430.79 598.30 L434.79 606.30 Z" fill="#0000ff"/>
<path d="M438.11 613.00 L442.11 605.00 L446.11 613.00 Z" fill="#0000ff"/>
<path d="M449.43 617.80 L453.43 609.80 L457.43 617.80 Z" fill="#0000ff"/>
<path d="M460.74 623.80 L464.74 615.80 L468.74 623.80 Z" fill="#0000ff"/>
<path d="M472.06 628.40 L476.06 620.40 L480.06 628.40 Z" fill="#0000ff"/>
<path d="M483.38 633.00 L487.38 625.00 L491.38 633.00 Z" fill="#0000ff"/>
<path d="M494.69 636.80 L498.69 628.80 L502.69 636.80 Z" fill="#0000ff"/>
<path d="M506.01 640.30 L510.01 632.30 L514.01 640.30 Z" fill="#0000ff"/>
<path d="M116.50 681.50 C122.08 681.52 144.08 681.32 150.00 681.60 C155.92 681.88 148.58 682.80 152.00 683.20 C155.42 683.60 165.53 683.73 170.50 684.00 C175.47 684.27 178.04 684.53 181.82 684.80 C185.59 685.07 189.36 685.35 193.13 685.60 C196.91 685.85 200.68 686.15 204.45 686.30 C208.22 686.45 212.00 686.40 215.77 686.50 C219.54 686.60 223.31 686.61 227.09 686.92 C230.86 687.24 234.63 687.83 238.40 688.38 C242.17 688.92 245.95 689.67 249.72 690.17 C253.49 690.68 257.26 691.09 261.04 691.42 C264.81 691.76 268.58 691.85 272.35 692.20 C276.13 692.55 279.90 692.91 283.67 693.52 C287.44 694.14 291.21 695.14 294.99 695.88 C298.76 696.61 302.53 697.24 306.30 697.92 C310.08 698.61 313.85 699.19 317.62 700.00 C321.39 700.81 325.17 701.83 328.94 702.78 C332.71 703.72 336.48 704.62 340.25 705.68 C344.03 706.73 347.80 707.85 351.57 709.10 C355.34 710.35 359.12 711.77 362.89 713.15 C366.66 714.53 370.43 715.87 374.21 717.38 C377.98 718.88 381.75 720.45 385.52 722.17 C389.30 723.90 393.07 725.85 396.84 727.70 C400.61 729.55 404.38 731.39 408.16 733.27 C411.93 735.16 415.70 737.01 419.47 739.00 C423.25 740.99 427.02 743.10 430.79 745.23 C434.56 747.35 438.34 749.66 442.11 751.78 C445.88 753.89 449.65 756.03 453.43 757.92 C457.20 759.82 460.97 761.47 464.74 763.15 C468.51 764.83 472.29 766.40 476.06 768.00 C479.83 769.60 483.60 771.23 487.38 772.75 C491.15 774.27 494.92 775.67 498.69 777.10 C502.47 778.52 504.21 779.95 510.01 781.30 C515.81 782.65 526.63 784.18 533.50 785.20 C540.37 786.22 544.78 786.90 551.20 787.40 C557.62 787.90 564.78 788.17 572.00 788.20 C579.22 788.23 586.80 788.07 594.50 787.60 C602.20 787.13 610.32 786.13 618.20 785.40 C626.08 784.67 634.83 783.80 641.80 783.20 C648.77 782.60 653.63 782.10 660.00 781.80 C666.37 781.50 673.67 781.37 680.00 781.40 C686.33 781.43 692.22 781.57 698.00 782.00 C703.78 782.43 708.30 782.90 714.70 784.00 C721.10 785.10 729.52 786.85 736.40 788.60 C743.28 790.35 750.10 792.53 756.00 794.50 C761.90 796.47 766.53 797.95 771.80 800.40 C777.07 802.85 782.67 806.33 787.60 809.20 C792.53 812.07 797.53 815.13 801.40 817.60 C805.27 820.07 809.23 822.93 810.80 824.00 L811 538.2 L842 563.5" fill="none" stroke="#000" stroke-width="2.2" stroke-linejoin="miter"/>
<polyline points="170.50,684.50 181.82,684.50 193.13,685.70 204.45,686.50 215.77,686.50 227.09,686.50 238.40,688.20 249.72,690.60 261.04,691.30 272.35,692.50 283.67,692.50 294.99,696.60 306.30,697.80 317.62,699.50 328.94,703.20 340.25,705.20 351.57,709.10 362.89,713.00 374.21,717.50 385.52,721.50 396.84,728.20 408.16,732.90 419.47,739.10 430.79,744.90 442.11,752.00 453.43,758.20 464.74,763.30 476.06,767.80 487.38,773.10 498.69,777.00 510.01,781.30" fill="none" stroke="#ff0000" stroke-width="1" stroke-linejoin="round" />
<circle cx="170.50" cy="684.50" r="4.00" fill="#ff0000"/>
<circle cx="181.82" cy="684.50" r="4.00" fill="#ff0000"/>
<circle cx="193.13" cy="685.70" r="4.00" fill="#ff0000"/>
<circle cx="204.45" cy="686.50" r="4.00" fill="#ff0000"/>
<circle cx="215.77" cy="686.50" r="4.00" fill="#ff0000"/>
<circle cx="227.09" cy="686.50" r="4.00" fill="#ff0000"/>
<circle cx="238.40" cy="688.20" r="4.00" fill="#ff0000"/>
<circle cx="249.72" cy="690.60" r="4.00" fill="#ff0000"/>
<circle cx="261.04" cy="691.30" r="4.00" fill="#ff0000"/>
<circle cx="272.35" cy="692.50" r="4.00" fill="#ff0000"/>
<circle cx="283.67" cy="692.50" r="4.00" fill="#ff0000"/>
<circle cx="294.99" cy="696.60" r="4.00" fill="#ff0000"/>
<circle cx="306.30" cy="697.80" r="4.00" fill="#ff0000"/>
<circle cx="317.62" cy="699.50" r="4.00" fill="#ff0000"/>
<circle cx="328.94" cy="703.20" r="4.00" fill="#ff0000"/>
<circle cx="340.25" cy="705.20" r="4.00" fill="#ff0000"/>
<circle cx="351.57" cy="709.10" r="4.00" fill="#ff0000"/>
<circle cx="362.89" cy="713.00" r="4.00" fill="#ff0000"/>
<circle cx="374.21" cy="717.50" r="4.00" fill="#ff0000"/>
<circle cx="385.52" cy="721.50" r="4.00" fill="#ff0000"/>
<circle cx="396.84" cy="728.20" r="4.00" fill="#ff0000"/>
<circle cx="408.16" cy="732.90" r="4.00" fill="#ff0000"/>
<circle cx="419.47" cy="739.10" r="4.00" fill="#ff0000"/>
<circle cx="430.79" cy="744.90" r="4.00" fill="#ff0000"/>
<circle cx="442.11" cy="752.00" r="4.00" fill="#ff0000"/>
<circle cx="453.43" cy="758.20" r="4.00" fill="#ff0000"/>
<circle cx="464.74" cy="763.30" r="4.00" fill="#ff0000"/>
<circle cx="476.06" cy="767.80" r="4.00" fill="#ff0000"/>
<circle cx="487.38" cy="773.10" r="4.00" fill="#ff0000"/>
<circle cx="498.69" cy="777.00" r="4.00" fill="#ff0000"/>
<circle cx="510.01" cy="781.30" r="4.00" fill="#ff0000"/>
</g>
<rect x="510" y="535" width="1" height="293" fill="#ff00ff" />
<rect x="597" y="548" width="231" height="57" fill="#000" />
<rect x="591" y="542" width="234" height="60" fill="#000" />
<rect x="592" y="543" width="232" height="58" fill="#fff" />
<circle cx="620.00" cy="550.00" r="4.00" fill="#ff0000"/>
<text x="649.2" y="553.24" font-size="9" font-weight="bold" text-anchor="start" fill="#000" >OLTF (ADC0_CH0 / ADC0_CH3)</text>
<path d="M616.00 568.70 L620.00 560.70 L624.00 568.70 Z" fill="#0000ff"/>
<text x="649.2" y="567.94" font-size="9" font-weight="bold" text-anchor="start" fill="#000" >OFS (ADC0_CH20 / ADC0_CH3)</text>
<rect x="616.00" y="575.00" width="8.00" height="8.00" fill="#00ff00"/>
<text x="649.2" y="582.24" font-size="9" font-weight="bold" text-anchor="start" fill="#000" >AOM+PD (ADC0_CH0 / ADC0_CH20)</text>
<rect x="600" y="593" width="41" height="2" fill="#000" />
<text x="649.2" y="597.24" font-size="9" font-weight="bold" text-anchor="start" fill="#000" >Transfer function</text>
<text x="478.5" y="870.6" font-size="16" font-weight="bold" text-anchor="middle" fill="#000" >Frequency (Hz)</text>
<text transform="translate(63.4,681.5) rotate(-90)" font-size="17" font-weight="bold" text-anchor="middle">Phase (deg)</text>
<text x="48.2" y="897.5" font-size="15" font-weight="bold" text-anchor="start" fill="#ff0000" >*T0=04/11/2024 06:03:09.160034</text>
<text x="431.3" y="897.5" font-size="15" font-weight="bold" text-anchor="start" fill="#000" >Avg=31</text>
<rect x="37" y="916" width="199" height="19" fill="#000" />
<rect x="39" y="913" width="197" height="20" fill="#000" />
<rect x="40" y="914" width="195" height="18" fill="#ffffff" />
<rect x="41" y="915" width="193" height="16" fill="#f2f2f2" />
<text x="137.5" y="928.8" font-size="16" font-weight="bold" text-anchor="middle" fill="#000" >Coherence function</text>
<path d="M116 980.5 H842 M116 1010.5 H842 M116 1039.5 H842 M116 1069.5 H842 M116 1098.5 H842 M116 1127.5 H842 M116 1157.5 H842 M116 1186.5 H842 M116 1216.5 H842 M133.5 951 V1246 M244.5 951 V1246 M310.5 951 V1246 M356.5 951 V1246 M392.5 951 V1246 M421.5 951 V1246 M446.5 951 V1246 M467.5 951 V1246 M486.5 951 V1246 M503.5 951 V1246 M614.5 951 V1246 M680.5 951 V1246 M726.5 951 V1246 M762.5 951 V1246 M791.5 951 V1246 M816.5 951 V1246 M837.5 951 V1246" stroke="#000" stroke-width="1" stroke-dasharray="1 2" fill="none" shape-rendering="crispEdges"/>
<path d="M116 1245.5 h9 M842 1245.5 h-9.5 M116 1239.5 h9 M842 1239.5 h-9.5 M116 1233.5 h9 M842 1233.5 h-9.5 M116 1227.5 h9 M842 1227.5 h-9.5 M116 1221.5 h9 M842 1221.5 h-9.5 M116 1216.5 h9 M842 1216.5 h-9.5 M116 1210.5 h9 M842 1210.5 h-9.5 M116 1204.5 h9 M842 1204.5 h-9.5 M116 1198.5 h9 M842 1198.5 h-9.5 M116 1192.5 h9 M842 1192.5 h-9.5 M116 1186.5 h9 M842 1186.5 h-9.5 M116 1180.5 h9 M842 1180.5 h-9.5 M116 1174.5 h9 M842 1174.5 h-9.5 M116 1169.5 h9 M842 1169.5 h-9.5 M116 1163.5 h9 M842 1163.5 h-9.5 M116 1157.5 h9 M842 1157.5 h-9.5 M116 1151.5 h9 M842 1151.5 h-9.5 M116 1145.5 h9 M842 1145.5 h-9.5 M116 1139.5 h9 M842 1139.5 h-9.5 M116 1133.5 h9 M842 1133.5 h-9.5 M116 1127.5 h9 M842 1127.5 h-9.5 M116 1122.5 h9 M842 1122.5 h-9.5 M116 1116.5 h9 M842 1116.5 h-9.5 M116 1110.5 h9 M842 1110.5 h-9.5 M116 1104.5 h9 M842 1104.5 h-9.5 M116 1098.5 h9 M842 1098.5 h-9.5 M116 1092.5 h9 M842 1092.5 h-9.5 M116 1086.5 h9 M842 1086.5 h-9.5 M116 1080.5 h9 M842 1080.5 h-9.5 M116 1074.5 h9 M842 1074.5 h-9.5 M116 1069.5 h9 M842 1069.5 h-9.5 M116 1063.5 h9 M842 1063.5 h-9.5 M116 1057.5 h9 M842 1057.5 h-9.5 M116 1051.5 h9 M842 1051.5 h-9.5 M116 1045.5 h9 M842 1045.5 h-9.5 M116 1039.5 h9 M842 1039.5 h-9.5 M116 1033.5 h9 M842 1033.5 h-9.5 M116 1027.5 h9 M842 1027.5 h-9.5 M116 1022.5 h9 M842 1022.5 h-9.5 M116 1016.5 h9 M842 1016.5 h-9.5 M116 1010.5 h9 M842 1010.5 h-9.5 M116 1004.5 h9 M842 1004.5 h-9.5 M116 998.5 h9 M842 998.5 h-9.5 M116 992.5 h9 M842 992.5 h-9.5 M116 986.5 h9 M842 986.5 h-9.5 M116 980.5 h9 M842 980.5 h-9.5 M116 975.5 h9 M842 975.5 h-9.5 M116 969.5 h9 M842 969.5 h-9.5 M116 963.5 h9 M842 963.5 h-9.5 M116 957.5 h9 M842 957.5 h-9.5 M116 951.5 h9 M842 951.5 h-9.5 M116 951.5 h17 M842 951.5 h-17 M116 980.5 h17 M842 980.5 h-17 M116 1010.5 h17 M842 1010.5 h-17 M116 1039.5 h17 M842 1039.5 h-17 M116 1069.5 h17 M842 1069.5 h-17 M116 1098.5 h17 M842 1098.5 h-17 M116 1127.5 h17 M842 1127.5 h-17 M116 1157.5 h17 M842 1157.5 h-17 M116 1186.5 h17 M842 1186.5 h-17 M116 1216.5 h17 M842 1216.5 h-17 M116 1245.5 h17 M842 1245.5 h-17 M116.5 1246 v-6.5 M116.5 951 v6.5 M133.5 1246 v-11 M133.5 951 v11 M244.5 1246 v-6.5 M244.5 951 v6.5 M310.5 1246 v-6.5 M310.5 951 v6.5 M356.5 1246 v-6.5 M356.5 951 v6.5 M392.5 1246 v-6.5 M392.5 951 v6.5 M421.5 1246 v-6.5 M421.5 951 v6.5 M446.5 1246 v-6.5 M446.5 951 v6.5 M467.5 1246 v-6.5 M467.5 951 v6.5 M486.5 1246 v-6.5 M486.5 951 v6.5 M503.5 1246 v-11 M503.5 951 v11 M614.5 1246 v-6.5 M614.5 951 v6.5 M680.5 1246 v-6.5 M680.5 951 v6.5 M726.5 1246 v-6.5 M726.5 951 v6.5 M762.5 1246 v-6.5 M762.5 951 v6.5 M791.5 1246 v-6.5 M791.5 951 v6.5 M816.5 1246 v-6.5 M816.5 951 v6.5 M837.5 1246 v-6.5 M837.5 951 v6.5" stroke="#000" stroke-width="1" fill="none" shape-rendering="crispEdges"/>
<rect x="116.5" y="951.5" width="725" height="294" fill="none" stroke="#000" stroke-width="1" shape-rendering="crispEdges"/>
<text x="111.5" y="956.9" font-size="15" font-weight="bold" text-anchor="end" fill="#000" >1</text>
<text x="111.5" y="986.3" font-size="15" font-weight="bold" text-anchor="end" fill="#000" >0.9</text>
<text x="111.5" y="1015.6999999999999" font-size="15" font-weight="bold" text-anchor="end" fill="#000" >0.8</text>
<text x="111.5" y="1045.1000000000001" font-size="15" font-weight="bold" text-anchor="end" fill="#000" >0.7</text>
<text x="111.5" y="1074.5" font-size="15" font-weight="bold" text-anchor="end" fill="#000" >0.6</text>
<text x="111.5" y="1103.9" font-size="15" font-weight="bold" text-anchor="end" fill="#000" >0.5</text>
<text x="111.5" y="1133.3000000000002" font-size="15" font-weight="bold" text-anchor="end" fill="#000" >0.4</text>
<text x="111.5" y="1162.7" font-size="15" font-weight="bold" text-anchor="end" fill="#000" >0.3</text>
<text x="111.5" y="1192.1000000000001" font-size="15" font-weight="bold" text-anchor="end" fill="#000" >0.2</text>
<text x="111.5" y="1221.5" font-size="15" font-weight="bold" text-anchor="end" fill="#000" >0.1</text>
<text x="111.5" y="1250.9" font-size="15" font-weight="bold" text-anchor="end" fill="#000" >0</text>
<text x="132.70" y="1266" font-size="15" font-weight="bold" text-anchor="middle">10<tspan font-size="10" dy="-7.6">2</tspan></text>
<text x="502.70" y="1266" font-size="15" font-weight="bold" text-anchor="middle">10<tspan font-size="10" dy="-7.6">3</tspan></text>
<polyline points="133.50,952.00 156.58,952.00 179.66,952.00 202.74,952.00 225.82,952.00 248.90,952.00 271.98,952.00 295.06,952.00 318.14,952.00 341.22,952.00 364.30,952.00 387.38,952.00 410.46,952.00 433.54,952.00 456.62,952.00 479.70,952.00 502.78,952.00 525.86,952.00 548.94,952.00 572.02,952.00 595.10,952.00 618.18,952.00 641.26,952.00 664.34,952.00 687.42,952.00 710.50,952.00 733.58,952.00 756.66,952.00 779.74,952.00 802.82,952.00 825.90,952.00" fill="none" stroke="#0000ff" stroke-width="1.5" stroke-linejoin="round" />
<path d="M129.50 956.00 L133.50 948.00 L137.50 956.00 Z" fill="#0000ff"/>
<path d="M152.58 956.00 L156.58 948.00 L160.58 956.00 Z" fill="#0000ff"/>
<path d="M175.66 956.00 L179.66 948.00 L183.66 956.00 Z" fill="#0000ff"/>
<path d="M198.74 956.00 L202.74 948.00 L206.74 956.00 Z" fill="#0000ff"/>
<path d="M221.82 956.00 L225.82 948.00 L229.82 956.00 Z" fill="#0000ff"/>
<path d="M244.90 956.00 L248.90 948.00 L252.90 956.00 Z" fill="#0000ff"/>
<path d="M267.98 956.00 L271.98 948.00 L275.98 956.00 Z" fill="#0000ff"/>
<path d="M291.06 956.00 L295.06 948.00 L299.06 956.00 Z" fill="#0000ff"/>
<path d="M314.14 956.00 L318.14 948.00 L322.14 956.00 Z" fill="#0000ff"/>
<path d="M337.22 956.00 L341.22 948.00 L345.22 956.00 Z" fill="#0000ff"/>
<path d="M360.30 956.00 L364.30 948.00 L368.30 956.00 Z" fill="#0000ff"/>
<path d="M383.38 956.00 L387.38 948.00 L391.38 956.00 Z" fill="#0000ff"/>
<path d="M406.46 956.00 L410.46 948.00 L414.46 956.00 Z" fill="#0000ff"/>
<path d="M429.54 956.00 L433.54 948.00 L437.54 956.00 Z" fill="#0000ff"/>
<path d="M452.62 956.00 L456.62 948.00 L460.62 956.00 Z" fill="#0000ff"/>
<path d="M475.70 956.00 L479.70 948.00 L483.70 956.00 Z" fill="#0000ff"/>
<path d="M498.78 956.00 L502.78 948.00 L506.78 956.00 Z" fill="#0000ff"/>
<path d="M521.86 956.00 L525.86 948.00 L529.86 956.00 Z" fill="#0000ff"/>
<path d="M544.94 956.00 L548.94 948.00 L552.94 956.00 Z" fill="#0000ff"/>
<path d="M568.02 956.00 L572.02 948.00 L576.02 956.00 Z" fill="#0000ff"/>
<path d="M591.10 956.00 L595.10 948.00 L599.10 956.00 Z" fill="#0000ff"/>
<path d="M614.18 956.00 L618.18 948.00 L622.18 956.00 Z" fill="#0000ff"/>
<path d="M637.26 956.00 L641.26 948.00 L645.26 956.00 Z" fill="#0000ff"/>
<path d="M660.34 956.00 L664.34 948.00 L668.34 956.00 Z" fill="#0000ff"/>
<path d="M683.42 956.00 L687.42 948.00 L691.42 956.00 Z" fill="#0000ff"/>
<path d="M706.50 956.00 L710.50 948.00 L714.50 956.00 Z" fill="#0000ff"/>
<path d="M729.58 956.00 L733.58 948.00 L737.58 956.00 Z" fill="#0000ff"/>
<path d="M752.66 956.00 L756.66 948.00 L760.66 956.00 Z" fill="#0000ff"/>
<path d="M775.74 956.00 L779.74 948.00 L783.74 956.00 Z" fill="#0000ff"/>
<path d="M798.82 956.00 L802.82 948.00 L806.82 956.00 Z" fill="#0000ff"/>
<path d="M821.90 956.00 L825.90 948.00 L829.90 956.00 Z" fill="#0000ff"/>
<polyline points="133.50,951.50 156.58,951.50 179.66,951.50 202.74,951.50 225.82,951.50 248.90,951.50 271.98,951.50 295.06,951.50 318.14,951.50 341.22,951.50 364.30,951.50 387.38,951.50 410.46,951.50 433.54,951.50 456.62,951.50 479.70,951.50 502.78,951.50 525.86,951.50 548.94,951.50 572.02,951.50 595.10,951.50 618.18,951.50 641.26,951.50 664.34,951.50 687.42,951.50 710.50,951.50 733.58,951.50 756.66,951.50 779.74,951.50 802.82,951.50 825.90,951.50" fill="none" stroke="#00ff00" stroke-width="1" stroke-linejoin="round" />
<rect x="129.50" y="947.30" width="8.00" height="8.00" fill="#00ff00"/>
<rect x="152.58" y="947.30" width="8.00" height="8.00" fill="#00ff00"/>
<rect x="175.66" y="947.30" width="8.00" height="8.00" fill="#00ff00"/>
<rect x="198.74" y="947.30" width="8.00" height="8.00" fill="#00ff00"/>
<rect x="221.82" y="947.30" width="8.00" height="8.00" fill="#00ff00"/>
<rect x="244.90" y="947.30" width="8.00" height="8.00" fill="#00ff00"/>
<rect x="267.98" y="947.30" width="8.00" height="8.00" fill="#00ff00"/>
<rect x="291.06" y="947.30" width="8.00" height="8.00" fill="#00ff00"/>
<rect x="314.14" y="947.30" width="8.00" height="8.00" fill="#00ff00"/>
<rect x="337.22" y="947.30" width="8.00" height="8.00" fill="#00ff00"/>
<rect x="360.30" y="947.30" width="8.00" height="8.00" fill="#00ff00"/>
<rect x="383.38" y="947.30" width="8.00" height="8.00" fill="#00ff00"/>
<rect x="406.46" y="947.30" width="8.00" height="8.00" fill="#00ff00"/>
<rect x="429.54" y="947.30" width="8.00" height="8.00" fill="#00ff00"/>
<rect x="452.62" y="947.30" width="8.00" height="8.00" fill="#00ff00"/>
<rect x="475.70" y="947.30" width="8.00" height="8.00" fill="#00ff00"/>
<rect x="498.78" y="947.30" width="8.00" height="8.00" fill="#00ff00"/>
<rect x="521.86" y="947.30" width="8.00" height="8.00" fill="#00ff00"/>
<rect x="544.94" y="947.30" width="8.00" height="8.00" fill="#00ff00"/>
<rect x="568.02" y="947.30" width="8.00" height="8.00" fill="#00ff00"/>
<rect x="591.10" y="947.30" width="8.00" height="8.00" fill="#00ff00"/>
<rect x="614.18" y="947.30" width="8.00" height="8.00" fill="#00ff00"/>
<rect x="637.26" y="947.30" width="8.00" height="8.00" fill="#00ff00"/>
<rect x="660.34" y="947.30" width="8.00" height="8.00" fill="#00ff00"/>
<rect x="683.42" y="947.30" width="8.00" height="8.00" fill="#00ff00"/>
<rect x="706.50" y="947.30" width="8.00" height="8.00" fill="#00ff00"/>
<rect x="729.58" y="947.30" width="8.00" height="8.00" fill="#00ff00"/>
<rect x="752.66" y="947.30" width="8.00" height="8.00" fill="#00ff00"/>
<rect x="775.74" y="947.30" width="8.00" height="8.00" fill="#00ff00"/>
<rect x="798.82" y="947.30" width="8.00" height="8.00" fill="#00ff00"/>
<rect x="821.90" y="947.30" width="8.00" height="8.00" fill="#00ff00"/>
<polyline points="133.50,952.50 156.58,952.50 179.66,952.50 202.74,951.80 225.82,951.80 248.90,951.80 271.98,951.80 295.06,952.50 318.14,952.50 341.22,952.50 364.30,952.50 387.38,952.50 410.46,952.50 433.54,952.50 456.62,951.80 479.70,952.50 502.78,952.50 525.86,951.80 548.94,951.80 572.02,951.80 595.10,951.80 618.18,951.80 641.26,951.80 664.34,951.80 687.42,951.80 710.50,951.80 733.58,951.80 756.66,951.80 779.74,951.80 802.82,951.80 825.90,951.80" fill="none" stroke="#ff0000" stroke-width="1" stroke-linejoin="round" />
<circle cx="133.50" cy="952.50" r="4.00" fill="#ff0000"/>
<circle cx="156.58" cy="952.50" r="4.00" fill="#ff0000"/>
<circle cx="179.66" cy="952.50" r="4.00" fill="#ff0000"/>
<circle cx="202.74" cy="951.80" r="4.00" fill="#ff0000"/>
<circle cx="225.82" cy="951.80" r="4.00" fill="#ff0000"/>
<circle cx="248.90" cy="951.80" r="4.00" fill="#ff0000"/>
<circle cx="271.98" cy="951.80" r="4.00" fill="#ff0000"/>
<circle cx="295.06" cy="952.50" r="4.00" fill="#ff0000"/>
<circle cx="318.14" cy="952.50" r="4.00" fill="#ff0000"/>
<circle cx="341.22" cy="952.50" r="4.00" fill="#ff0000"/>
<circle cx="364.30" cy="952.50" r="4.00" fill="#ff0000"/>
<circle cx="387.38" cy="952.50" r="4.00" fill="#ff0000"/>
<circle cx="410.46" cy="952.50" r="4.00" fill="#ff0000"/>
<circle cx="433.54" cy="952.50" r="4.00" fill="#ff0000"/>
<circle cx="456.62" cy="951.80" r="4.00" fill="#ff0000"/>
<circle cx="479.70" cy="952.50" r="4.00" fill="#ff0000"/>
<circle cx="502.78" cy="952.50" r="4.00" fill="#ff0000"/>
<circle cx="525.86" cy="951.80" r="4.00" fill="#ff0000"/>
<circle cx="548.94" cy="951.80" r="4.00" fill="#ff0000"/>
<circle cx="572.02" cy="951.80" r="4.00" fill="#ff0000"/>
<circle cx="595.10" cy="951.80" r="4.00" fill="#ff0000"/>
<circle cx="618.18" cy="951.80" r="4.00" fill="#ff0000"/>
<circle cx="641.26" cy="951.80" r="4.00" fill="#ff0000"/>
<circle cx="664.34" cy="951.80" r="4.00" fill="#ff0000"/>
<circle cx="687.42" cy="951.80" r="4.00" fill="#ff0000"/>
<circle cx="710.50" cy="951.80" r="4.00" fill="#ff0000"/>
<circle cx="733.58" cy="951.80" r="4.00" fill="#ff0000"/>
<circle cx="756.66" cy="951.80" r="4.00" fill="#ff0000"/>
<circle cx="779.74" cy="951.80" r="4.00" fill="#ff0000"/>
<circle cx="802.82" cy="951.80" r="4.00" fill="#ff0000"/>
<circle cx="825.90" cy="951.80" r="4.00" fill="#ff0000"/>
<rect x="139" y="1171" width="289" height="70" fill="#000" />
<rect x="133" y="1165" width="292" height="73" fill="#000" />
<rect x="134" y="1166" width="290" height="71" fill="#fff" />
<circle cx="169.10" cy="1173.80" r="4.00" fill="#ff0000"/>
<text x="206.1" y="1178.12" font-size="12" font-weight="bold" text-anchor="start" fill="#000" >OLTF (ADC0_CH0 / ADC0_CH3)</text>
<path d="M165.10 1195.90 L169.10 1187.90 L173.10 1195.90 Z" fill="#0000ff"/>
<text x="206.1" y="1196.22" font-size="12" font-weight="bold" text-anchor="start" fill="#000" >OFS (ADC0_CH20 / ADC0_CH3)</text>
<rect x="165.10" y="1205.90" width="8.00" height="8.00" fill="#00ff00"/>
<text x="206.1" y="1214.22" font-size="12" font-weight="bold" text-anchor="start" fill="#000" >AOM+PD (ADC0_CH0 / ADC0_CH20)</text>
<path d="M165.10 1223.50 L173.10 1223.50 L169.10 1231.50 Z" fill="#8c6454"/>
<text x="206.1" y="1231.82" font-size="12" font-weight="bold" text-anchor="start" fill="#000" >ERR / EXC</text>
<text x="478.5" y="1287.6" font-size="16" font-weight="bold" text-anchor="middle" fill="#000" >Frequency (Hz)</text>
<text transform="translate(63.4,1098) rotate(-90)" font-size="17" font-weight="bold" text-anchor="middle">Coherence</text>
<text x="48.2" y="1314.5" font-size="15" font-weight="bold" text-anchor="start" fill="#000" >T0=04/11/2024 06:03:09.160034</text>
<text x="431.3" y="1314.5" font-size="15" font-weight="bold" text-anchor="start" fill="#000" >Avg=31</text>
<rect x="917" y="82" width="176" height="19" fill="#000" />
<rect x="919" y="79" width="174" height="20" fill="#000" />
<rect x="920" y="80" width="172" height="18" fill="#ffffff" />
<rect x="921" y="81" width="170" height="16" fill="#f2f2f2" />
<text x="1006.0" y="94.8" font-size="16" font-weight="bold" text-anchor="middle" fill="#000" >Transfer function</text>
<path d="M996 166.5 H1722 M996 215.5 H1722 M996 264.5 H1722 M996 313.5 H1722 M996 362.5 H1722 M1013.5 117 V412 M1124.5 117 V412 M1189.5 117 V412 M1236.5 117 V412 M1271.5 117 V412 M1301.5 117 V412 M1326.5 117 V412 M1347.5 117 V412 M1366.5 117 V412 M1383.5 117 V412 M1494.5 117 V412 M1559.5 117 V412 M1605.5 117 V412 M1641.5 117 V412 M1671.5 117 V412 M1695.5 117 V412 M1717.5 117 V412" stroke="#000" stroke-width="1" stroke-dasharray="1 2" fill="none" shape-rendering="crispEdges"/>
<path d="M996 411.5 h9 M1722 411.5 h-9.5 M996 401.5 h9 M1722 401.5 h-9.5 M996 391.5 h9 M1722 391.5 h-9.5 M996 382.5 h9 M1722 382.5 h-9.5 M996 372.5 h9 M1722 372.5 h-9.5 M996 362.5 h9 M1722 362.5 h-9.5 M996 352.5 h9 M1722 352.5 h-9.5 M996 342.5 h9 M1722 342.5 h-9.5 M996 333.5 h9 M1722 333.5 h-9.5 M996 323.5 h9 M1722 323.5 h-9.5 M996 313.5 h9 M1722 313.5 h-9.5 M996 303.5 h9 M1722 303.5 h-9.5 M996 293.5 h9 M1722 293.5 h-9.5 M996 284.5 h9 M1722 284.5 h-9.5 M996 274.5 h9 M1722 274.5 h-9.5 M996 264.5 h9 M1722 264.5 h-9.5 M996 254.5 h9 M1722 254.5 h-9.5 M996 244.5 h9 M1722 244.5 h-9.5 M996 235.5 h9 M1722 235.5 h-9.5 M996 225.5 h9 M1722 225.5 h-9.5 M996 215.5 h9 M1722 215.5 h-9.5 M996 205.5 h9 M1722 205.5 h-9.5 M996 195.5 h9 M1722 195.5 h-9.5 M996 186.5 h9 M1722 186.5 h-9.5 M996 176.5 h9 M1722 176.5 h-9.5 M996 166.5 h9 M1722 166.5 h-9.5 M996 156.5 h9 M1722 156.5 h-9.5 M996 146.5 h9 M1722 146.5 h-9.5 M996 137.5 h9 M1722 137.5 h-9.5 M996 127.5 h9 M1722 127.5 h-9.5 M996 117.5 h9 M1722 117.5 h-9.5 M996 117.5 h17 M1722 117.5 h-17 M996 166.5 h17 M1722 166.5 h-17 M996 215.5 h17 M1722 215.5 h-17 M996 264.5 h17 M1722 264.5 h-17 M996 313.5 h17 M1722 313.5 h-17 M996 362.5 h17 M1722 362.5 h-17 M996 411.5 h17 M1722 411.5 h-17 M996.5 412 v-6.5 M996.5 117 v6.5 M1013.5 412 v-11 M1013.5 117 v11 M1124.5 412 v-6.5 M1124.5 117 v6.5 M1189.5 412 v-6.5 M1189.5 117 v6.5 M1236.5 412 v-6.5 M1236.5 117 v6.5 M1271.5 412 v-6.5 M1271.5 117 v6.5 M1301.5 412 v-6.5 M1301.5 117 v6.5 M1326.5 412 v-6.5 M1326.5 117 v6.5 M1347.5 412 v-6.5 M1347.5 117 v6.5 M1366.5 412 v-6.5 M1366.5 117 v6.5 M1383.5 412 v-11 M1383.5 117 v11 M1494.5 412 v-6.5 M1494.5 117 v6.5 M1559.5 412 v-6.5 M1559.5 117 v6.5 M1605.5 412 v-6.5 M1605.5 117 v6.5 M1641.5 412 v-6.5 M1641.5 117 v6.5 M1671.5 412 v-6.5 M1671.5 117 v6.5 M1695.5 412 v-6.5 M1695.5 117 v6.5 M1717.5 412 v-6.5 M1717.5 117 v6.5" stroke="#000" stroke-width="1" fill="none" shape-rendering="crispEdges"/>
<rect x="996.5" y="117.5" width="725" height="294" fill="none" stroke="#000" stroke-width="1" shape-rendering="crispEdges"/>
<text x="991.5" y="122.9" font-size="15" font-weight="bold" text-anchor="end" fill="#000" >20</text>
<text x="991.5" y="171.9" font-size="15" font-weight="bold" text-anchor="end" fill="#000" >15</text>
<text x="991.5" y="220.9" font-size="15" font-weight="bold" text-anchor="end" fill="#000" >10</text>
<text x="991.5" y="269.9" font-size="15" font-weight="bold" text-anchor="end" fill="#000" >5</text>
<text x="991.5" y="318.9" font-size="15" font-weight="bold" text-anchor="end" fill="#000" >0</text>
<text x="991.5" y="367.9" font-size="15" font-weight="bold" text-anchor="end" fill="#000" >−5</text>
<text x="991.5" y="416.9" font-size="15" font-weight="bold" text-anchor="end" fill="#000" >−10</text>
<text x="1012.70" y="432" font-size="15" font-weight="bold" text-anchor="middle">10<tspan font-size="10" dy="-7.6">2</tspan></text>
<text x="1382.50" y="432" font-size="15" font-weight="bold" text-anchor="middle">10<tspan font-size="10" dy="-7.6">3</tspan></text>
<polyline points="1013.50,171.20 1036.59,171.20 1059.68,171.20 1082.77,171.20 1105.86,172.50 1128.95,170.60 1152.04,172.50 1175.13,170.60 1198.22,170.60 1221.31,170.60 1244.40,172.50 1267.49,170.60 1290.58,170.60 1313.67,172.50 1336.76,171.10 1359.85,171.10 1382.94,172.10 1406.03,171.10 1429.12,171.10 1452.21,171.10 1475.30,171.10 1498.39,172.10 1521.48,171.10 1544.57,172.10 1567.66,172.10 1590.75,171.10 1613.84,171.10 1636.93,172.90 1660.02,172.90 1683.11,172.90 1706.20,172.10" fill="none" stroke="#8c6454" stroke-width="1" stroke-linejoin="round" />
<path d="M1009.50 166.70 L1017.50 166.70 L1013.50 174.70 Z" fill="#8c6454"/>
<path d="M1032.59 166.70 L1040.59 166.70 L1036.59 174.70 Z" fill="#8c6454"/>
<path d="M1055.68 166.70 L1063.68 166.70 L1059.68 174.70 Z" fill="#8c6454"/>
<path d="M1078.77 166.70 L1086.77 166.70 L1082.77 174.70 Z" fill="#8c6454"/>
<path d="M1101.86 168.00 L1109.86 168.00 L1105.86 176.00 Z" fill="#8c6454"/>
<path d="M1124.95 166.10 L1132.95 166.10 L1128.95 174.10 Z" fill="#8c6454"/>
<path d="M1148.04 168.00 L1156.04 168.00 L1152.04 176.00 Z" fill="#8c6454"/>
<path d="M1171.13 166.10 L1179.13 166.10 L1175.13 174.10 Z" fill="#8c6454"/>
<path d="M1194.22 166.10 L1202.22 166.10 L1198.22 174.10 Z" fill="#8c6454"/>
<path d="M1217.31 166.10 L1225.31 166.10 L1221.31 174.10 Z" fill="#8c6454"/>
<path d="M1240.40 168.00 L1248.40 168.00 L1244.40 176.00 Z" fill="#8c6454"/>
<path d="M1263.49 166.10 L1271.49 166.10 L1267.49 174.10 Z" fill="#8c6454"/>
<path d="M1286.58 166.10 L1294.58 166.10 L1290.58 174.10 Z" fill="#8c6454"/>
<path d="M1309.67 168.00 L1317.67 168.00 L1313.67 176.00 Z" fill="#8c6454"/>
<path d="M1332.76 166.60 L1340.76 166.60 L1336.76 174.60 Z" fill="#8c6454"/>
<path d="M1355.85 166.60 L1363.85 166.60 L1359.85 174.60 Z" fill="#8c6454"/>
<path d="M1378.94 167.60 L1386.94 167.60 L1382.94 175.60 Z" fill="#8c6454"/>
<path d="M1402.03 166.60 L1410.03 166.60 L1406.03 174.60 Z" fill="#8c6454"/>
<path d="M1425.12 166.60 L1433.12 166.60 L1429.12 174.60 Z" fill="#8c6454"/>
<path d="M1448.21 166.60 L1456.21 166.60 L1452.21 174.60 Z" fill="#8c6454"/>
<path d="M1471.30 166.60 L1479.30 166.60 L1475.30 174.60 Z" fill="#8c6454"/>
<path d="M1494.39 167.60 L1502.39 167.60 L1498.39 175.60 Z" fill="#8c6454"/>
<path d="M1517.48 166.60 L1525.48 166.60 L1521.48 174.60 Z" fill="#8c6454"/>
<path d="M1540.57 167.60 L1548.57 167.60 L1544.57 175.60 Z" fill="#8c6454"/>
<path d="M1563.66 167.60 L1571.66 167.60 L1567.66 175.60 Z" fill="#8c6454"/>
<path d="M1586.75 166.60 L1594.75 166.60 L1590.75 174.60 Z" fill="#8c6454"/>
<path d="M1609.84 166.60 L1617.84 166.60 L1613.84 174.60 Z" fill="#8c6454"/>
<path d="M1632.93 168.40 L1640.93 168.40 L1636.93 176.40 Z" fill="#8c6454"/>
<path d="M1656.02 168.40 L1664.02 168.40 L1660.02 176.40 Z" fill="#8c6454"/>
<path d="M1679.11 168.40 L1687.11 168.40 L1683.11 176.40 Z" fill="#8c6454"/>
<path d="M1702.20 167.60 L1710.20 167.60 L1706.20 175.60 Z" fill="#8c6454"/>
<polyline points="1013.50,386.30 1036.59,386.30 1059.68,386.30 1082.77,386.30 1105.86,386.30 1128.95,386.30 1152.04,386.30 1175.13,386.30 1198.22,386.30 1221.31,386.30 1244.40,386.30 1267.49,386.30 1290.58,386.30 1313.67,386.30 1336.76,386.30 1359.85,386.30 1382.94,386.30 1406.03,386.30 1429.12,386.30 1452.21,386.30 1475.30,386.30 1498.39,386.30 1521.48,386.30 1544.57,386.30 1567.66,386.30 1590.75,387.30 1613.84,387.30 1636.93,387.30 1660.02,387.30 1683.11,387.30 1706.20,387.30" fill="none" stroke="#ff00ff" stroke-width="1.5" stroke-linejoin="round" />
<polygon points="1013.50,390.50 1012.50,387.68 1009.51,387.60 1011.88,385.77 1011.03,382.90 1013.50,384.60 1015.97,382.90 1015.12,385.77 1017.49,387.60 1014.50,387.68" fill="#ff00ff"/>
<polygon points="1036.59,390.50 1035.59,387.68 1032.60,387.60 1034.97,385.77 1034.12,382.90 1036.59,384.60 1039.06,382.90 1038.21,385.77 1040.58,387.60 1037.59,387.68" fill="#ff00ff"/>
<polygon points="1059.68,390.50 1058.68,387.68 1055.69,387.60 1058.06,385.77 1057.21,382.90 1059.68,384.60 1062.15,382.90 1061.30,385.77 1063.67,387.60 1060.68,387.68" fill="#ff00ff"/>
<polygon points="1082.77,390.50 1081.77,387.68 1078.78,387.60 1081.15,385.77 1080.30,382.90 1082.77,384.60 1085.24,382.90 1084.39,385.77 1086.76,387.60 1083.77,387.68" fill="#ff00ff"/>
<polygon points="1105.86,390.50 1104.86,387.68 1101.87,387.60 1104.24,385.77 1103.39,382.90 1105.86,384.60 1108.33,382.90 1107.48,385.77 1109.85,387.60 1106.86,387.68" fill="#ff00ff"/>
<polygon points="1128.95,390.50 1127.95,387.68 1124.96,387.60 1127.33,385.77 1126.48,382.90 1128.95,384.60 1131.42,382.90 1130.57,385.77 1132.94,387.60 1129.95,387.68" fill="#ff00ff"/>
<polygon points="1152.04,390.50 1151.04,387.68 1148.05,387.60 1150.42,385.77 1149.57,382.90 1152.04,384.60 1154.51,382.90 1153.66,385.77 1156.03,387.60 1153.04,387.68" fill="#ff00ff"/>
<polygon points="1175.13,390.50 1174.13,387.68 1171.14,387.60 1173.51,385.77 1172.66,382.90 1175.13,384.60 1177.60,382.90 1176.75,385.77 1179.12,387.60 1176.13,387.68" fill="#ff00ff"/>
<polygon points="1198.22,390.50 1197.22,387.68 1194.23,387.60 1196.60,385.77 1195.75,382.90 1198.22,384.60 1200.69,382.90 1199.84,385.77 1202.21,387.60 1199.22,387.68" fill="#ff00ff"/>
<polygon points="1221.31,390.50 1220.31,387.68 1217.32,387.60 1219.69,385.77 1218.84,382.90 1221.31,384.60 1223.78,382.90 1222.93,385.77 1225.30,387.60 1222.31,387.68" fill="#ff00ff"/>
<polygon points="1244.40,390.50 1243.40,387.68 1240.41,387.60 1242.78,385.77 1241.93,382.90 1244.40,384.60 1246.87,382.90 1246.02,385.77 1248.39,387.60 1245.40,387.68" fill="#ff00ff"/>
<polygon points="1267.49,390.50 1266.49,387.68 1263.50,387.60 1265.87,385.77 1265.02,382.90 1267.49,384.60 1269.96,382.90 1269.11,385.77 1271.48,387.60 1268.49,387.68" fill="#ff00ff"/>
<polygon points="1290.58,390.50 1289.58,387.68 1286.59,387.60 1288.96,385.77 1288.11,382.90 1290.58,384.60 1293.05,382.90 1292.20,385.77 1294.57,387.60 1291.58,387.68" fill="#ff00ff"/>
<polygon points="1313.67,390.50 1312.67,387.68 1309.68,387.60 1312.05,385.77 1311.20,382.90 1313.67,384.60 1316.14,382.90 1315.29,385.77 1317.66,387.60 1314.67,387.68" fill="#ff00ff"/>
<polygon points="1336.76,390.50 1335.76,387.68 1332.77,387.60 1335.14,385.77 1334.29,382.90 1336.76,384.60 1339.23,382.90 1338.38,385.77 1340.75,387.60 1337.76,387.68" fill="#ff00ff"/>
<polygon points="1359.85,390.50 1358.85,387.68 1355.86,387.60 1358.23,385.77 1357.38,382.90 1359.85,384.60 1362.32,382.90 1361.47,385.77 1363.84,387.60 1360.85,387.68" fill="#ff00ff"/>
<polygon points="1382.94,390.50 1381.94,387.68 1378.95,387.60 1381.32,385.77 1380.47,382.90 1382.94,384.60 1385.41,382.90 1384.56,385.77 1386.93,387.60 1383.94,387.68" fill="#ff00ff"/>
<polygon points="1406.03,390.50 1405.03,387.68 1402.04,387.60 1404.41,385.77 1403.56,382.90 1406.03,384.60 1408.50,382.90 1407.65,385.77 1410.02,387.60 1407.03,387.68" fill="#ff00ff"/>
<polygon points="1429.12,390.50 1428.12,387.68 1425.13,387.60 1427.50,385.77 1426.65,382.90 1429.12,384.60 1431.59,382.90 1430.74,385.77 1433.11,387.60 1430.12,387.68" fill="#ff00ff"/>
<polygon points="1452.21,390.50 1451.21,387.68 1448.22,387.60 1450.59,385.77 1449.74,382.90 1452.21,384.60 1454.68,382.90 1453.83,385.77 1456.20,387.60 1453.21,387.68" fill="#ff00ff"/>
<polygon points="1475.30,390.50 1474.30,387.68 1471.31,387.60 1473.68,385.77 1472.83,382.90 1475.30,384.60 1477.77,382.90 1476.92,385.77 1479.29,387.60 1476.30,387.68" fill="#ff00ff"/>
<polygon points="1498.39,390.50 1497.39,387.68 1494.40,387.60 1496.77,385.77 1495.92,382.90 1498.39,384.60 1500.86,382.90 1500.01,385.77 1502.38,387.60 1499.39,387.68" fill="#ff00ff"/>
<polygon points="1521.48,390.50 1520.48,387.68 1517.49,387.60 1519.86,385.77 1519.01,382.90 1521.48,384.60 1523.95,382.90 1523.10,385.77 1525.47,387.60 1522.48,387.68" fill="#ff00ff"/>
<polygon points="1544.57,390.50 1543.57,387.68 1540.58,387.60 1542.95,385.77 1542.10,382.90 1544.57,384.60 1547.04,382.90 1546.19,385.77 1548.56,387.60 1545.57,387.68" fill="#ff00ff"/>
<polygon points="1567.66,390.50 1566.66,387.68 1563.67,387.60 1566.04,385.77 1565.19,382.90 1567.66,384.60 1570.13,382.90 1569.28,385.77 1571.65,387.60 1568.66,387.68" fill="#ff00ff"/>
<polygon points="1590.75,391.50 1589.75,388.68 1586.76,388.60 1589.13,386.77 1588.28,383.90 1590.75,385.60 1593.22,383.90 1592.37,386.77 1594.74,388.60 1591.75,388.68" fill="#ff00ff"/>
<polygon points="1613.84,391.50 1612.84,388.68 1609.85,388.60 1612.22,386.77 1611.37,383.90 1613.84,385.60 1616.31,383.90 1615.46,386.77 1617.83,388.60 1614.84,388.68" fill="#ff00ff"/>
<polygon points="1636.93,391.50 1635.93,388.68 1632.94,388.60 1635.31,386.77 1634.46,383.90 1636.93,385.60 1639.40,383.90 1638.55,386.77 1640.92,388.60 1637.93,388.68" fill="#ff00ff"/>
<polygon points="1660.02,391.50 1659.02,388.68 1656.03,388.60 1658.40,386.77 1657.55,383.90 1660.02,385.60 1662.49,383.90 1661.64,386.77 1664.01,388.60 1661.02,388.68" fill="#ff00ff"/>
<polygon points="1683.11,391.50 1682.11,388.68 1679.12,388.60 1681.49,386.77 1680.64,383.90 1683.11,385.60 1685.58,383.90 1684.73,386.77 1687.10,388.60 1684.11,388.68" fill="#ff00ff"/>
<polygon points="1706.20,391.50 1705.20,388.68 1702.21,388.60 1704.58,386.77 1703.73,383.90 1706.20,385.60 1708.67,383.90 1707.82,386.77 1710.19,388.60 1707.20,388.68" fill="#ff00ff"/>
<rect x="1361" y="131" width="347" height="37" fill="#000" />
<rect x="1355" y="125" width="350" height="40" fill="#000" />
<rect x="1356" y="126" width="348" height="38" fill="#fff" />
<path d="M1394.20 130.70 L1402.20 130.70 L1398.20 138.70 Z" fill="#8c6454"/>
<text x="1442.5" y="139.01999999999998" font-size="12" font-weight="bold" text-anchor="start" fill="#000" >AOM to TxPD (ADC0_CH2 / ADC0_CH20)</text>
<polygon points="1398.20,158.00 1397.20,155.18 1394.21,155.10 1396.58,153.27 1395.73,150.40 1398.20,152.10 1400.67,150.40 1399.82,153.27 1402.19,155.10 1399.20,155.18" fill="#ff00ff"/>
<text x="1442.5" y="158.12" font-size="12" font-weight="bold" text-anchor="start" fill="#000" >OFSPD to TxPD (ADC0_CH2 / ADC0_CH0)</text>
<text x="1358.5" y="453.6" font-size="16" font-weight="bold" text-anchor="middle" fill="#000" >Frequency (Hz)</text>
<text transform="translate(943.4,264.5) rotate(-90)" font-size="17" font-weight="bold" text-anchor="middle">Magnitude (dB W/V)</text>
<text x="928.3" y="480.5" font-size="15" font-weight="bold" text-anchor="start" fill="#000" >T0=04/11/2024 06:03:09.160034</text>
<text x="1311.3" y="480.5" font-size="15" font-weight="bold" text-anchor="start" fill="#000" >Avg=31</text>
<rect x="917" y="499" width="176" height="19" fill="#000" />
<rect x="919" y="496" width="174" height="20" fill="#000" />
<rect x="920" y="497" width="172" height="18" fill="#ffffff" />
<rect x="921" y="498" width="170" height="16" fill="#f2f2f2" />
<text x="1006.0" y="511.8" font-size="16" font-weight="bold" text-anchor="middle" fill="#000" >Transfer function</text>
<path d="M996 562.5 H1722 M996 602.5 H1722 M996 641.5 H1722 M996 681.5 H1722 M996 721.5 H1722 M996 760.5 H1722 M996 800.5 H1722 M1013.5 534 V829 M1124.5 534 V829 M1189.5 534 V829 M1236.5 534 V829 M1271.5 534 V829 M1301.5 534 V829 M1326.5 534 V829 M1347.5 534 V829 M1366.5 534 V829 M1383.5 534 V829 M1494.5 534 V829 M1559.5 534 V829 M1605.5 534 V829 M1641.5 534 V829 M1671.5 534 V829 M1695.5 534 V829 M1717.5 534 V829" stroke="#000" stroke-width="1" stroke-dasharray="1 2" fill="none" shape-rendering="crispEdges"/>
<path d="M996 824.5 h9 M1722 824.5 h-9.5 M996 816.5 h9 M1722 816.5 h-9.5 M996 808.5 h9 M1722 808.5 h-9.5 M996 800.5 h9 M1722 800.5 h-9.5 M996 792.5 h9 M1722 792.5 h-9.5 M996 784.5 h9 M1722 784.5 h-9.5 M996 776.5 h9 M1722 776.5 h-9.5 M996 768.5 h9 M1722 768.5 h-9.5 M996 760.5 h9 M1722 760.5 h-9.5 M996 753.5 h9 M1722 753.5 h-9.5 M996 745.5 h9 M1722 745.5 h-9.5 M996 737.5 h9 M1722 737.5 h-9.5 M996 729.5 h9 M1722 729.5 h-9.5 M996 721.5 h9 M1722 721.5 h-9.5 M996 713.5 h9 M1722 713.5 h-9.5 M996 705.5 h9 M1722 705.5 h-9.5 M996 697.5 h9 M1722 697.5 h-9.5 M996 689.5 h9 M1722 689.5 h-9.5 M996 681.5 h9 M1722 681.5 h-9.5 M996 673.5 h9 M1722 673.5 h-9.5 M996 665.5 h9 M1722 665.5 h-9.5 M996 657.5 h9 M1722 657.5 h-9.5 M996 649.5 h9 M1722 649.5 h-9.5 M996 641.5 h9 M1722 641.5 h-9.5 M996 633.5 h9 M1722 633.5 h-9.5 M996 625.5 h9 M1722 625.5 h-9.5 M996 617.5 h9 M1722 617.5 h-9.5 M996 609.5 h9 M1722 609.5 h-9.5 M996 602.5 h9 M1722 602.5 h-9.5 M996 594.5 h9 M1722 594.5 h-9.5 M996 586.5 h9 M1722 586.5 h-9.5 M996 578.5 h9 M1722 578.5 h-9.5 M996 570.5 h9 M1722 570.5 h-9.5 M996 562.5 h9 M1722 562.5 h-9.5 M996 554.5 h9 M1722 554.5 h-9.5 M996 546.5 h9 M1722 546.5 h-9.5 M996 538.5 h9 M1722 538.5 h-9.5 M996 562.5 h17 M1722 562.5 h-17 M996 602.5 h17 M1722 602.5 h-17 M996 641.5 h17 M1722 641.5 h-17 M996 681.5 h17 M1722 681.5 h-17 M996 721.5 h17 M1722 721.5 h-17 M996 760.5 h17 M1722 760.5 h-17 M996 800.5 h17 M1722 800.5 h-17 M996.5 829 v-6.5 M996.5 534 v6.5 M1013.5 829 v-11 M1013.5 534 v11 M1124.5 829 v-6.5 M1124.5 534 v6.5 M1189.5 829 v-6.5 M1189.5 534 v6.5 M1236.5 829 v-6.5 M1236.5 534 v6.5 M1271.5 829 v-6.5 M1271.5 534 v6.5 M1301.5 829 v-6.5 M1301.5 534 v6.5 M1326.5 829 v-6.5 M1326.5 534 v6.5 M1347.5 829 v-6.5 M1347.5 534 v6.5 M1366.5 829 v-6.5 M1366.5 534 v6.5 M1383.5 829 v-11 M1383.5 534 v11 M1494.5 829 v-6.5 M1494.5 534 v6.5 M1559.5 829 v-6.5 M1559.5 534 v6.5 M1605.5 829 v-6.5 M1605.5 534 v6.5 M1641.5 829 v-6.5 M1641.5 534 v6.5 M1671.5 829 v-6.5 M1671.5 534 v6.5 M1695.5 829 v-6.5 M1695.5 534 v6.5 M1717.5 829 v-6.5 M1717.5 534 v6.5" stroke="#000" stroke-width="1" fill="none" shape-rendering="crispEdges"/>
<rect x="996.5" y="534.5" width="725" height="294" fill="none" stroke="#000" stroke-width="1" shape-rendering="crispEdges"/>
<text x="991.5" y="567.7108108108108" font-size="15" font-weight="bold" text-anchor="end" fill="#000" >150</text>
<text x="991.5" y="607.4405405405405" font-size="15" font-weight="bold" text-anchor="end" fill="#000" >100</text>
<text x="991.5" y="647.1702702702703" font-size="15" font-weight="bold" text-anchor="end" fill="#000" >50</text>
<text x="991.5" y="686.9" font-size="15" font-weight="bold" text-anchor="end" fill="#000" >0</text>
<text x="991.5" y="726.6297297297298" font-size="15" font-weight="bold" text-anchor="end" fill="#000" >−50</text>
<text x="991.5" y="766.3594594594595" font-size="15" font-weight="bold" text-anchor="end" fill="#000" >−100</text>
<text x="991.5" y="806.0891891891891" font-size="15" font-weight="bold" text-anchor="end" fill="#000" >−150</text>
<text x="1012.70" y="849" font-size="15" font-weight="bold" text-anchor="middle">10<tspan font-size="10" dy="-7.6">2</tspan></text>
<text x="1382.50" y="849" font-size="15" font-weight="bold" text-anchor="middle">10<tspan font-size="10" dy="-7.6">3</tspan></text>
<polyline points="1013.50,681.50 1036.59,681.50 1059.68,681.50 1082.77,681.50 1105.86,681.50 1128.95,681.50 1152.04,681.50 1175.13,682.70 1198.22,682.70 1221.31,682.70 1244.40,682.70 1267.49,682.70 1290.58,682.70 1313.67,682.70 1336.76,682.70 1359.85,682.70 1382.94,682.70 1406.03,682.70 1429.12,682.70 1452.21,682.70 1475.30,682.70 1498.39,682.70 1521.48,682.70 1544.57,682.70 1567.66,682.70 1590.75,682.70 1613.84,684.00 1636.93,684.00 1660.02,684.00 1683.11,684.00 1706.20,684.00" fill="none" stroke="#8c6454" stroke-width="1" stroke-linejoin="round" />
<path d="M1009.50 677.00 L1017.50 677.00 L1013.50 685.00 Z" fill="#8c6454"/>
<path d="M1032.59 677.00 L1040.59 677.00 L1036.59 685.00 Z" fill="#8c6454"/>
<path d="M1055.68 677.00 L1063.68 677.00 L1059.68 685.00 Z" fill="#8c6454"/>
<path d="M1078.77 677.00 L1086.77 677.00 L1082.77 685.00 Z" fill="#8c6454"/>
<path d="M1101.86 677.00 L1109.86 677.00 L1105.86 685.00 Z" fill="#8c6454"/>
<path d="M1124.95 677.00 L1132.95 677.00 L1128.95 685.00 Z" fill="#8c6454"/>
<path d="M1148.04 677.00 L1156.04 677.00 L1152.04 685.00 Z" fill="#8c6454"/>
<path d="M1171.13 678.20 L1179.13 678.20 L1175.13 686.20 Z" fill="#8c6454"/>
<path d="M1194.22 678.20 L1202.22 678.20 L1198.22 686.20 Z" fill="#8c6454"/>
<path d="M1217.31 678.20 L1225.31 678.20 L1221.31 686.20 Z" fill="#8c6454"/>
<path d="M1240.40 678.20 L1248.40 678.20 L1244.40 686.20 Z" fill="#8c6454"/>
<path d="M1263.49 678.20 L1271.49 678.20 L1267.49 686.20 Z" fill="#8c6454"/>
<path d="M1286.58 678.20 L1294.58 678.20 L1290.58 686.20 Z" fill="#8c6454"/>
<path d="M1309.67 678.20 L1317.67 678.20 L1313.67 686.20 Z" fill="#8c6454"/>
<path d="M1332.76 678.20 L1340.76 678.20 L1336.76 686.20 Z" fill="#8c6454"/>
<path d="M1355.85 678.20 L1363.85 678.20 L1359.85 686.20 Z" fill="#8c6454"/>
<path d="M1378.94 678.20 L1386.94 678.20 L1382.94 686.20 Z" fill="#8c6454"/>
<path d="M1402.03 678.20 L1410.03 678.20 L1406.03 686.20 Z" fill="#8c6454"/>
<path d="M1425.12 678.20 L1433.12 678.20 L1429.12 686.20 Z" fill="#8c6454"/>
<path d="M1448.21 678.20 L1456.21 678.20 L1452.21 686.20 Z" fill="#8c6454"/>
<path d="M1471.30 678.20 L1479.30 678.20 L1475.30 686.20 Z" fill="#8c6454"/>
<path d="M1494.39 678.20 L1502.39 678.20 L1498.39 686.20 Z" fill="#8c6454"/>
<path d="M1517.48 678.20 L1525.48 678.20 L1521.48 686.20 Z" fill="#8c6454"/>
<path d="M1540.57 678.20 L1548.57 678.20 L1544.57 686.20 Z" fill="#8c6454"/>
<path d="M1563.66 678.20 L1571.66 678.20 L1567.66 686.20 Z" fill="#8c6454"/>
<path d="M1586.75 678.20 L1594.75 678.20 L1590.75 686.20 Z" fill="#8c6454"/>
<path d="M1609.84 679.50 L1617.84 679.50 L1613.84 687.50 Z" fill="#8c6454"/>
<path d="M1632.93 679.50 L1640.93 679.50 L1636.93 687.50 Z" fill="#8c6454"/>
<path d="M1656.02 679.50 L1664.02 679.50 L1660.02 687.50 Z" fill="#8c6454"/>
<path d="M1679.11 679.50 L1687.11 679.50 L1683.11 687.50 Z" fill="#8c6454"/>
<path d="M1702.20 679.50 L1710.20 679.50 L1706.20 687.50 Z" fill="#8c6454"/>
<polyline points="1013.50,538.80 1036.59,538.80 1059.68,538.80 1082.77,538.80 1105.86,538.80 1128.95,538.80 1152.04,538.80 1175.13,538.80 1198.22,538.80 1221.31,538.80 1244.40,538.80 1267.49,538.80 1290.58,538.80 1313.67,538.80 1336.76,538.80 1359.85,538.80 1382.94,538.80 1406.03,538.80 1429.12,538.80 1452.21,538.80 1475.30,538.80 1498.39,538.80 1521.48,538.80 1544.57,538.80 1567.66,538.80 1590.75,538.80 1613.84,540.20 1636.93,540.20 1660.02,540.20 1683.11,540.20 1706.20,540.20" fill="none" stroke="#ff00ff" stroke-width="1.5" stroke-linejoin="round" />
<polygon points="1013.50,543.00 1012.50,540.18 1009.51,540.10 1011.88,538.27 1011.03,535.40 1013.50,537.10 1015.97,535.40 1015.12,538.27 1017.49,540.10 1014.50,540.18" fill="#ff00ff"/>
<polygon points="1036.59,543.00 1035.59,540.18 1032.60,540.10 1034.97,538.27 1034.12,535.40 1036.59,537.10 1039.06,535.40 1038.21,538.27 1040.58,540.10 1037.59,540.18" fill="#ff00ff"/>
<polygon points="1059.68,543.00 1058.68,540.18 1055.69,540.10 1058.06,538.27 1057.21,535.40 1059.68,537.10 1062.15,535.40 1061.30,538.27 1063.67,540.10 1060.68,540.18" fill="#ff00ff"/>
<polygon points="1082.77,543.00 1081.77,540.18 1078.78,540.10 1081.15,538.27 1080.30,535.40 1082.77,537.10 1085.24,535.40 1084.39,538.27 1086.76,540.10 1083.77,540.18" fill="#ff00ff"/>
<polygon points="1105.86,543.00 1104.86,540.18 1101.87,540.10 1104.24,538.27 1103.39,535.40 1105.86,537.10 1108.33,535.40 1107.48,538.27 1109.85,540.10 1106.86,540.18" fill="#ff00ff"/>
<polygon points="1128.95,543.00 1127.95,540.18 1124.96,540.10 1127.33,538.27 1126.48,535.40 1128.95,537.10 1131.42,535.40 1130.57,538.27 1132.94,540.10 1129.95,540.18" fill="#ff00ff"/>
<polygon points="1152.04,543.00 1151.04,540.18 1148.05,540.10 1150.42,538.27 1149.57,535.40 1152.04,537.10 1154.51,535.40 1153.66,538.27 1156.03,540.10 1153.04,540.18" fill="#ff00ff"/>
<polygon points="1175.13,543.00 1174.13,540.18 1171.14,540.10 1173.51,538.27 1172.66,535.40 1175.13,537.10 1177.60,535.40 1176.75,538.27 1179.12,540.10 1176.13,540.18" fill="#ff00ff"/>
<polygon points="1198.22,543.00 1197.22,540.18 1194.23,540.10 1196.60,538.27 1195.75,535.40 1198.22,537.10 1200.69,535.40 1199.84,538.27 1202.21,540.10 1199.22,540.18" fill="#ff00ff"/>
<polygon points="1221.31,543.00 1220.31,540.18 1217.32,540.10 1219.69,538.27 1218.84,535.40 1221.31,537.10 1223.78,535.40 1222.93,538.27 1225.30,540.10 1222.31,540.18" fill="#ff00ff"/>
<polygon points="1244.40,543.00 1243.40,540.18 1240.41,540.10 1242.78,538.27 1241.93,535.40 1244.40,537.10 1246.87,535.40 1246.02,538.27 1248.39,540.10 1245.40,540.18" fill="#ff00ff"/>
<polygon points="1267.49,543.00 1266.49,540.18 1263.50,540.10 1265.87,538.27 1265.02,535.40 1267.49,537.10 1269.96,535.40 1269.11,538.27 1271.48,540.10 1268.49,540.18" fill="#ff00ff"/>
<polygon points="1290.58,543.00 1289.58,540.18 1286.59,540.10 1288.96,538.27 1288.11,535.40 1290.58,537.10 1293.05,535.40 1292.20,538.27 1294.57,540.10 1291.58,540.18" fill="#ff00ff"/>
<polygon points="1313.67,543.00 1312.67,540.18 1309.68,540.10 1312.05,538.27 1311.20,535.40 1313.67,537.10 1316.14,535.40 1315.29,538.27 1317.66,540.10 1314.67,540.18" fill="#ff00ff"/>
<polygon points="1336.76,543.00 1335.76,540.18 1332.77,540.10 1335.14,538.27 1334.29,535.40 1336.76,537.10 1339.23,535.40 1338.38,538.27 1340.75,540.10 1337.76,540.18" fill="#ff00ff"/>
<polygon points="1359.85,543.00 1358.85,540.18 1355.86,540.10 1358.23,538.27 1357.38,535.40 1359.85,537.10 1362.32,535.40 1361.47,538.27 1363.84,540.10 1360.85,540.18" fill="#ff00ff"/>
<polygon points="1382.94,543.00 1381.94,540.18 1378.95,540.10 1381.32,538.27 1380.47,535.40 1382.94,537.10 1385.41,535.40 1384.56,538.27 1386.93,540.10 1383.94,540.18" fill="#ff00ff"/>
<polygon points="1406.03,543.00 1405.03,540.18 1402.04,540.10 1404.41,538.27 1403.56,535.40 1406.03,537.10 1408.50,535.40 1407.65,538.27 1410.02,540.10 1407.03,540.18" fill="#ff00ff"/>
<polygon points="1429.12,543.00 1428.12,540.18 1425.13,540.10 1427.50,538.27 1426.65,535.40 1429.12,537.10 1431.59,535.40 1430.74,538.27 1433.11,540.10 1430.12,540.18" fill="#ff00ff"/>
<polygon points="1452.21,543.00 1451.21,540.18 1448.22,540.10 1450.59,538.27 1449.74,535.40 1452.21,537.10 1454.68,535.40 1453.83,538.27 1456.20,540.10 1453.21,540.18" fill="#ff00ff"/>
<polygon points="1475.30,543.00 1474.30,540.18 1471.31,540.10 1473.68,538.27 1472.83,535.40 1475.30,537.10 1477.77,535.40 1476.92,538.27 1479.29,540.10 1476.30,540.18" fill="#ff00ff"/>
<polygon points="1498.39,543.00 1497.39,540.18 1494.40,540.10 1496.77,538.27 1495.92,535.40 1498.39,537.10 1500.86,535.40 1500.01,538.27 1502.38,540.10 1499.39,540.18" fill="#ff00ff"/>
<polygon points="1521.48,543.00 1520.48,540.18 1517.49,540.10 1519.86,538.27 1519.01,535.40 1521.48,537.10 1523.95,535.40 1523.10,538.27 1525.47,540.10 1522.48,540.18" fill="#ff00ff"/>
<polygon points="1544.57,543.00 1543.57,540.18 1540.58,540.10 1542.95,538.27 1542.10,535.40 1544.57,537.10 1547.04,535.40 1546.19,538.27 1548.56,540.10 1545.57,540.18" fill="#ff00ff"/>
<polygon points="1567.66,543.00 1566.66,540.18 1563.67,540.10 1566.04,538.27 1565.19,535.40 1567.66,537.10 1570.13,535.40 1569.28,538.27 1571.65,540.10 1568.66,540.18" fill="#ff00ff"/>
<polygon points="1590.75,543.00 1589.75,540.18 1586.76,540.10 1589.13,538.27 1588.28,535.40 1590.75,537.10 1593.22,535.40 1592.37,538.27 1594.74,540.10 1591.75,540.18" fill="#ff00ff"/>
<polygon points="1613.84,544.40 1612.84,541.58 1609.85,541.50 1612.22,539.67 1611.37,536.80 1613.84,538.50 1616.31,536.80 1615.46,539.67 1617.83,541.50 1614.84,541.58" fill="#ff00ff"/>
<polygon points="1636.93,544.40 1635.93,541.58 1632.94,541.50 1635.31,539.67 1634.46,536.80 1636.93,538.50 1639.40,536.80 1638.55,539.67 1640.92,541.50 1637.93,541.58" fill="#ff00ff"/>
<polygon points="1660.02,544.40 1659.02,541.58 1656.03,541.50 1658.40,539.67 1657.55,536.80 1660.02,538.50 1662.49,536.80 1661.64,539.67 1664.01,541.50 1661.02,541.58" fill="#ff00ff"/>
<polygon points="1683.11,544.40 1682.11,541.58 1679.12,541.50 1681.49,539.67 1680.64,536.80 1683.11,538.50 1685.58,536.80 1684.73,539.67 1687.10,541.50 1684.11,541.58" fill="#ff00ff"/>
<polygon points="1706.20,544.40 1705.20,541.58 1702.21,541.50 1704.58,539.67 1703.73,536.80 1706.20,538.50 1708.67,536.80 1707.82,539.67 1710.19,541.50 1707.20,541.58" fill="#ff00ff"/>
<rect x="1361" y="788" width="347" height="36" fill="#000" />
<rect x="1355" y="782" width="350" height="39" fill="#000" />
<rect x="1356" y="783" width="348" height="37" fill="#fff" />
<path d="M1394.20 787.00 L1402.20 787.00 L1398.20 795.00 Z" fill="#8c6454"/>
<text x="1442.5" y="795.32" font-size="12" font-weight="bold" text-anchor="start" fill="#000" >AOM to TxPD (ADC0_CH2 / ADC0_CH20)</text>
<polygon points="1398.20,814.50 1397.20,811.68 1394.21,811.60 1396.58,809.77 1395.73,806.90 1398.20,808.60 1400.67,806.90 1399.82,809.77 1402.19,811.60 1399.20,811.68" fill="#ff00ff"/>
<text x="1442.5" y="814.62" font-size="12" font-weight="bold" text-anchor="start" fill="#000" >OFSPD to TxPD (ADC0_CH2 / ADC0_CH0)</text>
<text x="1358.5" y="870.6" font-size="16" font-weight="bold" text-anchor="middle" fill="#000" >Frequency (Hz)</text>
<text transform="translate(943.4,681.5) rotate(-90)" font-size="17" font-weight="bold" text-anchor="middle">Phase (deg)</text>
<text x="928.3" y="897.5" font-size="15" font-weight="bold" text-anchor="start" fill="#000" >T0=04/11/2024 06:03:09.160034</text>
<text x="1311.3" y="897.5" font-size="15" font-weight="bold" text-anchor="start" fill="#000" >Avg=31</text>
</svg>
</body></html>
